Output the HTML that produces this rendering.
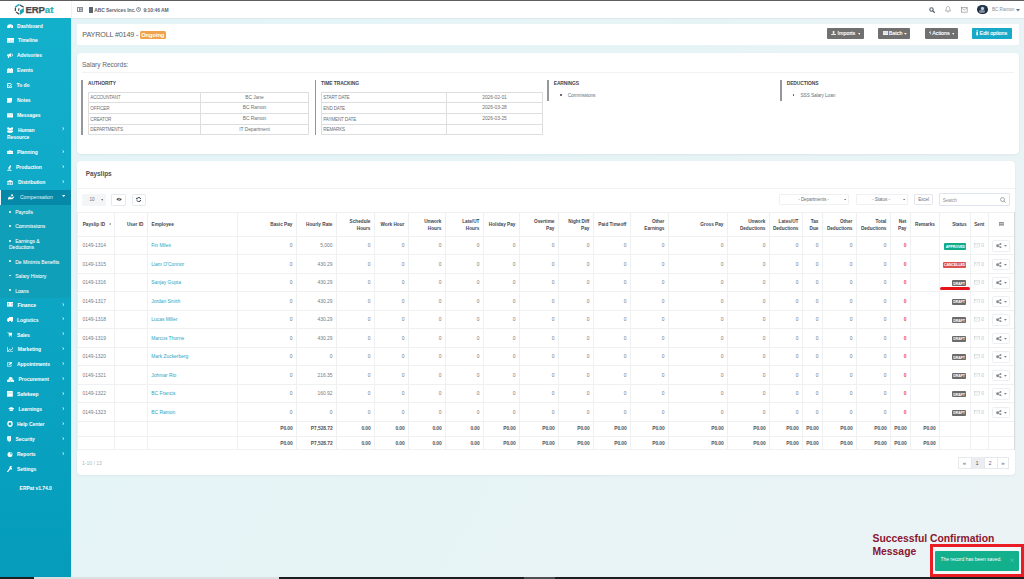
<!DOCTYPE html><html><head><meta charset="utf-8"><style>
html,body{margin:0;padding:0;}
body{width:1024px;height:579px;overflow:hidden;position:relative;background:linear-gradient(120deg,#e4f4f7 0%,#e6f4f6 45%,#ebf3f5 100%);font-family:"Liberation Sans", sans-serif;}
.t{position:absolute;white-space:nowrap;}

</style></head><body>
<div style="position:absolute;left:0px;top:0px;width:1024px;height:18px;background:#fff;"></div>
<div style="position:absolute;left:0px;top:0px;width:1024px;height:1px;background:#5e5e5e;"></div>
<div style="position:absolute;left:71px;top:1px;width:1px;height:17px;background:#f0f3f4;"></div>
<div style="position:absolute;left:0px;top:18px;width:1024px;height:1px;background:#dbe9ec;"></div>
<svg style="position:absolute;left:12px;top:2px" width="16" height="15" viewBox="12 2 16 15">
<path d="M15.6 6.9 L18.9 4.6" stroke="#23aab7" stroke-width="1.4" stroke-linecap="round"/>
<path d="M20.2 5.2 L23.2 6.9" stroke="#4a4a4c" stroke-width="1.3" stroke-linecap="round"/>
<path d="M15.4 8.1 L15.4 10.6" stroke="#4a4a4c" stroke-width="1.3" stroke-linecap="round"/>
<path d="M18.9 8.6 L18.6 10.4" stroke="#4a4a4c" stroke-width="1.1" stroke-linecap="round"/>
<path d="M16.4 12.3 L18.8 13.9" stroke="#4a4a4c" stroke-width="1.3" stroke-linecap="round"/>
<path d="M19.9 10.3 L23.9 7.9 L23.9 11.9 L19.9 15 Z" fill="#1ea5b4"/>
</svg>
<div class="t" style="left:25.6px;top:4.4px;font-size:9.6px;line-height:11px;font-weight:bold;color:#4a4a4c;letter-spacing:-0.2px;-webkit-text-stroke:0.25px #4a4a4c">ERP<span style="color:#22b3b0;letter-spacing:0.3px;-webkit-text-stroke:0.25px #22b3b0">at</span></div>
<svg style="position:absolute;left:77px;top:7px" width="6" height="5" viewBox="0 0 6 5"><rect x="0" y="0" width="6" height="5" fill="#8a8f94"/><rect x="1" y="1" width="1" height="3" fill="#fff"/><rect x="3" y="1.5" width="2" height="0.6" fill="#fff"/><rect x="3" y="3" width="2" height="0.6" fill="#fff"/></svg>
<div style="position:absolute;left:89px;top:6.8px;width:4px;height:6px;background:#5b6470;"></div>
<div class="t" style="left:94.2px;top:7.63px;font-size:4.95px;line-height:5.94px;color:#5b6470;font-weight:bold;letter-spacing:-0.06px;">ABC Services Inc.</div>
<svg style="position:absolute;left:136px;top:7.4px" width="5" height="5" viewBox="0 0 10 10"><circle cx="5" cy="5" r="4" fill="none" stroke="#5b6470" stroke-width="1.4"/><path d="M5 2.6 V5.2 H6.8" fill="none" stroke="#5b6470" stroke-width="1.2"/></svg>
<div class="t" style="left:143.4px;top:7.63px;font-size:4.95px;line-height:5.94px;color:#5b6470;font-weight:bold;letter-spacing:-0.08px;">9:10:46 AM</div>
<svg style="position:absolute;left:929.2px;top:6.6px" width="6" height="6" viewBox="0 0 12 12"><circle cx="5" cy="5" r="3.4" fill="none" stroke="#5b6470" stroke-width="2.2"/><path d="M7.6 7.6 L11 11" stroke="#5b6470" stroke-width="2.4" stroke-linecap="round"/></svg>
<svg style="position:absolute;left:945px;top:6.3px" width="6" height="7" viewBox="0 0 12 14"><path d="M6 1 C3 1 2.5 4 2.5 6.5 L1 10 H11 L9.5 6.5 C9.5 4 9 1 6 1 Z" fill="none" stroke="#8a8f94" stroke-width="1.3"/><path d="M4.5 11.5 Q6 13.5 7.5 11.5" fill="none" stroke="#8a8f94" stroke-width="1.2"/></svg>
<svg style="position:absolute;left:961px;top:7px" width="6.5" height="5.5" viewBox="0 0 13 11"><rect x="0.7" y="0.7" width="11.6" height="9.6" fill="none" stroke="#8a8f94" stroke-width="1.3"/><path d="M0.7 2 L6.5 6 L12.3 2" fill="none" stroke="#8a8f94" stroke-width="1.2"/></svg>
<div style="position:absolute;left:977px;top:4.6px;width:10.8px;height:9.8px;border-radius:50%;overflow:hidden;background:radial-gradient(circle at 50% 40%, #3d5a78 0%, #1d3048 50%, #121c28 80%);"><div style="position:absolute;left:3.5px;top:2px;width:3.5px;height:3px;background:#c9d0d8;border-radius:40%;"></div><div style="position:absolute;left:2px;top:5.5px;width:6px;height:3px;background:#7d8a98;border-radius:40%;"></div></div>
<div class="t" style="left:991.9px;top:7.48px;font-size:4.7px;line-height:5.64px;color:#8a8f94;font-weight:normal;letter-spacing:-0.05px;">BC Ramon</div>
<svg style="position:absolute;left:1016px;top:9px" width="4" height="3" viewBox="0 0 4 3"><path d="M0 0 H4 L2 2.5 Z" fill="#6b7178"/></svg>
<div style="position:absolute;left:0px;top:18px;width:71px;height:559px;background:linear-gradient(180deg,#13b0cc 0%,#0ea8c6 40%,#049cba 100%);"></div>
<div style="position:absolute;left:0px;top:190px;width:71px;height:15px;background:#0689a8;"></div>
<div style="position:absolute;left:0px;top:190px;width:1.2px;height:15px;background:#e8f6f9;"></div>
<div style="position:absolute;left:0px;top:205px;width:71px;height:93px;background:#109fb8;"></div>
<svg style="position:absolute;left:6.7px;top:23.7px" width="6.3" height="4.7" viewBox="0 0 12 10" preserveAspectRatio="none"><path d="M0.3 10 V6 A5.7 5.7 0 0 1 11.7 6 V10 Z" fill="#fff"/><path d="M6 9 L8 4.5" stroke="#12abc8" stroke-width="1.1"/><circle cx="6" cy="9" r="1" fill="#12abc8"/></svg>
<div class="t" style="left:17.1px;top:22.50px;font-size:5.0px;line-height:6.00px;color:#fff;font-weight:bold;letter-spacing:-0.06px;">Dashboard</div>
<svg style="position:absolute;left:6.7px;top:38.2px" width="7.3" height="4.7" viewBox="0 0 12 10" preserveAspectRatio="none"><rect x="0" y="0" width="12" height="10" fill="#fff"/><rect x="1.5" y="5.5" width="2.5" height="3" fill="#bfe9f1"/><rect x="5" y="3" width="2.5" height="5.5" fill="#bfe9f1"/><rect x="8.5" y="4.5" width="2.5" height="4" fill="#bfe9f1"/></svg>
<div class="t" style="left:18px;top:37.10px;font-size:5.0px;line-height:6.00px;color:#fff;font-weight:bold;letter-spacing:-0.06px;">Timeline</div>
<svg style="position:absolute;left:6.7px;top:53.2px" width="6.3" height="4.8" viewBox="0 0 12 10" preserveAspectRatio="none"><path d="M0 3 H2.5 L8 0 V8.5 L2.5 5.8 H0 Z" fill="#fff"/><rect x="1.6" y="5.6" width="2.6" height="4.4" fill="#fff"/><path d="M9.6 1.5 Q12.5 4.2 9.6 7" stroke="#fff" stroke-width="1.2" fill="none"/></svg>
<div class="t" style="left:17px;top:52.10px;font-size:5.0px;line-height:6.00px;color:#fff;font-weight:bold;letter-spacing:-0.06px;">Advisories</div>
<svg style="position:absolute;left:6.7px;top:67.7px" width="6.3" height="5.7" viewBox="0 0 12 10" preserveAspectRatio="none"><rect x="0" y="1.5" width="12" height="8.5" rx="0.8" fill="#fff"/><rect x="1.5" y="4.5" width="9" height="4.3" fill="#bfe9f1"/><rect x="5.3" y="4.5" width="1.2" height="4.3" fill="#fff"/><rect x="1.5" y="6.3" width="9" height="0.9" fill="#fff"/><rect x="2.5" y="0" width="1.8" height="3" fill="#fff"/><rect x="7.7" y="0" width="1.8" height="3" fill="#fff"/></svg>
<div class="t" style="left:17px;top:67.20px;font-size:5.0px;line-height:6.00px;color:#fff;font-weight:bold;letter-spacing:-0.06px;">Events</div>
<svg style="position:absolute;left:6.7px;top:82.7px" width="5.7" height="5.1" viewBox="0 0 12 10" preserveAspectRatio="none"><path d="M8 1 H1 V9.2 H9.2 V5.5" stroke="#fff" stroke-width="1.8" fill="none"/><path d="M2.6 4.6 L5 7 L11.2 0.8" stroke="#fff" stroke-width="1.9" fill="none"/></svg>
<div class="t" style="left:16.6px;top:82.30px;font-size:5.0px;line-height:6.00px;color:#fff;font-weight:bold;letter-spacing:-0.06px;">To do</div>
<svg style="position:absolute;left:6.9px;top:98.2px" width="5.5" height="4.7" viewBox="0 0 12 10" preserveAspectRatio="none"><path d="M0 0 H12 V7 L8 10 H0 Z" fill="#fff"/><path d="M8 10 V7 H12" fill="#9fdfeb"/></svg>
<div class="t" style="left:17px;top:97.00px;font-size:5.0px;line-height:6.00px;color:#fff;font-weight:bold;letter-spacing:-0.06px;">Notes</div>
<svg style="position:absolute;left:6.7px;top:113.2px" width="6.3" height="4.7" viewBox="0 0 12 10" preserveAspectRatio="none"><rect x="0" y="0.5" width="12" height="9" fill="#fff"/><path d="M0.3 1.2 L6 5.6 L11.7 1.2" stroke="#7fd3e3" stroke-width="1" fill="none"/></svg>
<div class="t" style="left:17px;top:111.80px;font-size:5.0px;line-height:6.00px;color:#fff;font-weight:bold;letter-spacing:-0.06px;">Messages</div>
<svg style="position:absolute;left:6.7px;top:149.8px" width="6.3" height="4.2" viewBox="0 0 12 10" preserveAspectRatio="none"><rect x="0" y="2.3" width="12" height="7.7" rx="1" fill="#fff"/><path d="M4 2.5 V0.8 H8 V2.5" stroke="#fff" stroke-width="1.2" fill="none"/><rect x="0" y="5.5" width="12" height="0.8" fill="#7fd3e3"/></svg>
<div class="t" style="left:17px;top:148.90px;font-size:5.0px;line-height:6.00px;color:#fff;font-weight:bold;letter-spacing:-0.06px;">Planning</div>
<svg style="position:absolute;left:62.2px;top:149.70px" width="2.5" height="3.2" viewBox="0 0 5 7"><path d="M1 0.8 L4 3.5 L1 6.2" stroke="#fff" stroke-width="1.9" fill="none"/></svg>
<svg style="position:absolute;left:6.7px;top:164.9px" width="5.3" height="5.7" viewBox="0 0 12 10" preserveAspectRatio="none"><path d="M7.5 0 L9.5 2 L6 7 L3.5 7 L3.5 4.5 Z" fill="#fff"/><path d="M2 7.5 H9" stroke="#fff" stroke-width="1"/><rect x="0.5" y="8.8" width="10" height="1.2" fill="#fff"/></svg>
<div class="t" style="left:16px;top:164.20px;font-size:5.0px;line-height:6.00px;color:#fff;font-weight:bold;letter-spacing:-0.06px;">Production</div>
<svg style="position:absolute;left:62.2px;top:165.00px" width="2.5" height="3.2" viewBox="0 0 5 7"><path d="M1 0.8 L4 3.5 L1 6.2" stroke="#fff" stroke-width="1.9" fill="none"/></svg>
<svg style="position:absolute;left:6.7px;top:179.9px" width="6.3" height="5.1" viewBox="0 0 12 10" preserveAspectRatio="none"><path d="M0 3 L6 0 L12 3 V3.8 H0 Z" fill="#fff"/><rect x="1" y="4.2" width="2" height="4.4" fill="#fff"/><rect x="5" y="4.2" width="2" height="4.4" fill="#fff"/><rect x="9" y="4.2" width="2" height="4.4" fill="#fff"/><rect x="0" y="8.8" width="12" height="1.2" fill="#fff"/></svg>
<div class="t" style="left:18px;top:179.00px;font-size:5.0px;line-height:6.00px;color:#fff;font-weight:bold;letter-spacing:-0.06px;">Distribution</div>
<svg style="position:absolute;left:62.2px;top:179.80px" width="2.5" height="3.2" viewBox="0 0 5 7"><path d="M1 0.8 L4 3.5 L1 6.2" stroke="#fff" stroke-width="1.9" fill="none"/></svg>
<svg style="position:absolute;left:6.9px;top:302.2px" width="6.6" height="4.6" viewBox="0 0 12 10" preserveAspectRatio="none"><rect x="0" y="0" width="12" height="10" fill="#fff"/><path d="M2.2 2.2 Q4.6 5 2.2 7.8" stroke="#12abc8" stroke-width="1.3" fill="none"/><path d="M9.8 2.2 Q7.4 5 9.8 7.8" stroke="#12abc8" stroke-width="1.3" fill="none"/></svg>
<div class="t" style="left:17.5px;top:301.80px;font-size:5.0px;line-height:6.00px;color:#fff;font-weight:bold;letter-spacing:-0.06px;">Finance</div>
<svg style="position:absolute;left:62.2px;top:302.60px" width="2.5" height="3.2" viewBox="0 0 5 7"><path d="M1 0.8 L4 3.5 L1 6.2" stroke="#fff" stroke-width="1.9" fill="none"/></svg>
<svg style="position:absolute;left:7px;top:317.3px" width="6" height="5.2" viewBox="0 0 12 10" preserveAspectRatio="none"><rect x="4" y="0" width="8" height="7.5" fill="#fff"/><path d="M0 5 L2 2 H4 V7.5 H0 Z" fill="#fff"/><circle cx="2.8" cy="8.5" r="1.5" fill="#fff"/><circle cx="9.5" cy="8.5" r="1.5" fill="#fff"/></svg>
<div class="t" style="left:17px;top:316.50px;font-size:5.0px;line-height:6.00px;color:#fff;font-weight:bold;letter-spacing:-0.06px;">Logistics</div>
<svg style="position:absolute;left:62.2px;top:317.30px" width="2.5" height="3.2" viewBox="0 0 5 7"><path d="M1 0.8 L4 3.5 L1 6.2" stroke="#fff" stroke-width="1.9" fill="none"/></svg>
<svg style="position:absolute;left:7px;top:332.3px" width="5.4" height="4.7" viewBox="0 0 12 10" preserveAspectRatio="none"><path d="M0 0 H3 L4.3 6.8 H11 L12 1.8 H2.5 Z" fill="#fff"/><rect x="3.6" y="7.3" width="7.8" height="0.9" fill="#fff"/><circle cx="5" cy="9" r="1" fill="#fff"/><circle cx="10" cy="9" r="1" fill="#fff"/></svg>
<div class="t" style="left:17px;top:331.50px;font-size:5.0px;line-height:6.00px;color:#fff;font-weight:bold;letter-spacing:-0.06px;">Sales</div>
<svg style="position:absolute;left:62.2px;top:332.30px" width="2.5" height="3.2" viewBox="0 0 5 7"><path d="M1 0.8 L4 3.5 L1 6.2" stroke="#fff" stroke-width="1.9" fill="none"/></svg>
<svg style="position:absolute;left:6.7px;top:346.8px" width="6.8" height="5.2" viewBox="0 0 12 10" preserveAspectRatio="none"><path d="M0.7 0 V9.3 H12" stroke="#fff" stroke-width="1.3" fill="none"/><path d="M2 7.5 L4.8 4.3 L7 6.5 L11 2" stroke="#fff" stroke-width="1.5" fill="none"/><path d="M9 1.5 H11.6 V4" stroke="#fff" stroke-width="1.2" fill="none"/></svg>
<div class="t" style="left:17.8px;top:346.30px;font-size:5.0px;line-height:6.00px;color:#fff;font-weight:bold;letter-spacing:-0.06px;">Marketing</div>
<svg style="position:absolute;left:62.2px;top:347.10px" width="2.5" height="3.2" viewBox="0 0 5 7"><path d="M1 0.8 L4 3.5 L1 6.2" stroke="#fff" stroke-width="1.9" fill="none"/></svg>
<svg style="position:absolute;left:6.7px;top:362px" width="5.7" height="4.6" viewBox="0 0 12 10" preserveAspectRatio="none"><path d="M9 1.2 H0.7 V9.3 H9 V6" stroke="#fff" stroke-width="1.4" fill="none"/><path d="M3.5 7 L4 4.5 L10 -0.5 L12 1.5 L6 6.5 Z" fill="#fff"/></svg>
<div class="t" style="left:17px;top:361.40px;font-size:5.0px;line-height:6.00px;color:#fff;font-weight:bold;letter-spacing:-0.06px;">Appointments</div>
<svg style="position:absolute;left:62.2px;top:362.20px" width="2.5" height="3.2" viewBox="0 0 5 7"><path d="M1 0.8 L4 3.5 L1 6.2" stroke="#fff" stroke-width="1.9" fill="none"/></svg>
<svg style="position:absolute;left:6.7px;top:376.8px" width="7.3" height="5.2" viewBox="0 0 12 10" preserveAspectRatio="none"><path d="M6 0 L9 1.5 V4.5 L6 6 L3 4.5 V1.5 Z" fill="#fff"/><path d="M3 4.3 L6 5.8 V8.8 L3 10.3 L0 8.8 V5.8 Z" fill="#fff"/><path d="M9 4.3 L12 5.8 V8.8 L9 10.3 L6 8.8 V5.8 Z" fill="#fff"/><path d="M1.5 7 L3 7.8 L4.5 7 M7.5 7 L9 7.8 L10.5 7" stroke="#7fd3e3" stroke-width="0.7" fill="none"/></svg>
<div class="t" style="left:18.6px;top:376.40px;font-size:5.0px;line-height:6.00px;color:#fff;font-weight:bold;letter-spacing:-0.06px;">Procurement</div>
<svg style="position:absolute;left:62.2px;top:377.20px" width="2.5" height="3.2" viewBox="0 0 5 7"><path d="M1 0.8 L4 3.5 L1 6.2" stroke="#fff" stroke-width="1.9" fill="none"/></svg>
<svg style="position:absolute;left:6.9px;top:391.3px" width="5.8" height="5.7" viewBox="0 0 12 10" preserveAspectRatio="none"><rect x="0" y="0" width="12" height="10" fill="#fff"/><rect x="2" y="2" width="8" height="3" fill="#c8edf4"/></svg>
<div class="t" style="left:17px;top:391.00px;font-size:5.0px;line-height:6.00px;color:#fff;font-weight:bold;letter-spacing:-0.06px;">Safekeep</div>
<svg style="position:absolute;left:62.2px;top:391.80px" width="2.5" height="3.2" viewBox="0 0 5 7"><path d="M1 0.8 L4 3.5 L1 6.2" stroke="#fff" stroke-width="1.9" fill="none"/></svg>
<svg style="position:absolute;left:7.5px;top:406.8px" width="6.5" height="4.7" viewBox="0 0 13 10.5" preserveAspectRatio="none"><path d="M0 3.2 L6.5 0 L13 3.2 L6.5 6.4 Z" fill="#fff"/><path d="M2.8 4.8 V8 Q6.5 10.5 10.2 8 V4.8 L6.5 6.8 Z" fill="#fff"/><path d="M12 3.5 V7" stroke="#fff" stroke-width="0.8"/></svg>
<div class="t" style="left:18.6px;top:406.00px;font-size:5.0px;line-height:6.00px;color:#fff;font-weight:bold;letter-spacing:-0.06px;">Learnings</div>
<svg style="position:absolute;left:62.2px;top:406.80px" width="2.5" height="3.2" viewBox="0 0 5 7"><path d="M1 0.8 L4 3.5 L1 6.2" stroke="#fff" stroke-width="1.9" fill="none"/></svg>
<svg style="position:absolute;left:6.7px;top:421.2px" width="6" height="5.7" viewBox="0 0 12 10" preserveAspectRatio="none"><circle cx="6" cy="5" r="4.2" fill="none" stroke="#fff" stroke-width="2.6"/></svg>
<div class="t" style="left:17px;top:421.00px;font-size:5.0px;line-height:6.00px;color:#fff;font-weight:bold;letter-spacing:-0.06px;">Help Center</div>
<svg style="position:absolute;left:62.2px;top:421.80px" width="2.5" height="3.2" viewBox="0 0 5 7"><path d="M1 0.8 L4 3.5 L1 6.2" stroke="#fff" stroke-width="1.9" fill="none"/></svg>
<svg style="position:absolute;left:7px;top:436.2px" width="4.4" height="5.8" viewBox="0 0 10 10.6" preserveAspectRatio="none"><path d="M0 0.8 L5 0 L10 0.8 V5.5 Q10 9 5 10.6 Q0 9 0 5.5 Z" fill="#fff"/><path d="M5 1.5 V9" stroke="#7fd3e3" stroke-width="1.2"/></svg>
<div class="t" style="left:15.6px;top:436.00px;font-size:5.0px;line-height:6.00px;color:#fff;font-weight:bold;letter-spacing:-0.06px;">Security</div>
<svg style="position:absolute;left:62.2px;top:436.80px" width="2.5" height="3.2" viewBox="0 0 5 7"><path d="M1 0.8 L4 3.5 L1 6.2" stroke="#fff" stroke-width="1.9" fill="none"/></svg>
<svg style="position:absolute;left:6.7px;top:451.8px" width="6" height="5.2" viewBox="0 0 12 10" preserveAspectRatio="none"><circle cx="6" cy="5" r="5" fill="#fff"/><path d="M6.2 4.6 V0.2 A4.8 4.8 0 0 1 10.8 4.6 Z" fill="#5cc8dc"/></svg>
<div class="t" style="left:17px;top:451.00px;font-size:5.0px;line-height:6.00px;color:#fff;font-weight:bold;letter-spacing:-0.06px;">Reports</div>
<svg style="position:absolute;left:62.2px;top:451.80px" width="2.5" height="3.2" viewBox="0 0 5 7"><path d="M1 0.8 L4 3.5 L1 6.2" stroke="#fff" stroke-width="1.9" fill="none"/></svg>
<svg style="position:absolute;left:6.7px;top:465.8px" width="5.7" height="6.2" viewBox="0 0 12 10" preserveAspectRatio="none"><path d="M1 9.5 L6.5 4" stroke="#fff" stroke-width="2.2" stroke-linecap="round"/><path d="M5.3 3.8 A3.3 3.3 0 0 1 10.6 0.4 L8.5 2.4 L9.3 3.4 L11.5 1.4 A3.3 3.3 0 0 1 7.4 5.8 Z" fill="#fff"/></svg>
<div class="t" style="left:17px;top:466.00px;font-size:5.0px;line-height:6.00px;color:#fff;font-weight:bold;letter-spacing:-0.06px;">Settings</div>
<svg style="position:absolute;left:6.7px;top:127.2px" width="6.3" height="5.8" viewBox="0 0 12 10" preserveAspectRatio="none"><circle cx="2.5" cy="2.5" r="2.2" fill="#fff"/><circle cx="9.5" cy="2.5" r="2.2" fill="#fff"/><circle cx="6" cy="4.2" r="2.4" fill="#fff"/><path d="M0 9 Q0 5.5 2.5 5.5 Q5 5.5 5 7 H7 Q7 5.5 9.5 5.5 Q12 5.5 12 9 Z" fill="#fff"/><rect x="2.5" y="7" width="7" height="3" rx="1" fill="#fff"/></svg>
<div class="t" style="left:17.9px;top:126.80px;font-size:5.0px;line-height:6.00px;color:#fff;font-weight:bold;letter-spacing:-0.06px;">Human</div>
<div class="t" style="left:7px;top:133.80px;font-size:5.0px;line-height:6.00px;color:#fff;font-weight:bold;letter-spacing:-0.06px;">Resource</div>
<svg style="position:absolute;left:62.2px;top:127.40px" width="2.5" height="3.2" viewBox="0 0 5 7"><path d="M1 0.8 L4 3.5 L1 6.2" stroke="#fff" stroke-width="1.9" fill="none"/></svg>
<svg style="position:absolute;left:7.9px;top:194px" width="7.2" height="5.9" viewBox="0 0 14 11"><path d="M0 7.5 L2.5 5 H6 Q7 5.6 6 6.4 H3.8 L4.2 7.2 H7.8 L11 4.6 Q12.4 4.4 12 5.8 L8.6 10 H1.8 L0 11 Z" fill="#fff"/><path d="M6 0.5 L9.5 0.5 L10 4 L6.5 4 Z" fill="#fff"/></svg>
<div class="t" style="left:19.9px;top:194.04px;font-size:5.1px;line-height:6.12px;color:#e3f3f7;font-weight:normal;letter-spacing:0px;">Compensation</div>
<svg style="position:absolute;left:62px;top:194.8px" width="3.2" height="2" viewBox="0 0 4 2.5"><path d="M0 0 H4 L2 2.5 Z" fill="#fff"/></svg>
<div style="position:absolute;left:8.9px;top:210.80px;width:1.8px;height:1.8px;background:#fff;border-radius:50%"></div>
<div class="t" style="left:15.2px;top:209.00px;font-size:5.0px;line-height:6.00px;color:#fff;font-weight:normal;letter-spacing:0px;-webkit-text-stroke:0.05px #fff;">Payrolls</div>
<div style="position:absolute;left:8.9px;top:225.00px;width:1.8px;height:1.8px;background:#fff;border-radius:50%"></div>
<div class="t" style="left:15.2px;top:223.20px;font-size:5.0px;line-height:6.00px;color:#fff;font-weight:normal;letter-spacing:0px;-webkit-text-stroke:0.05px #fff;">Commissions</div>
<div style="position:absolute;left:8.9px;top:240.20px;width:1.8px;height:1.8px;background:#fff;border-radius:50%"></div>
<div class="t" style="left:15.2px;top:238.40px;font-size:5.0px;line-height:6.00px;color:#fff;font-weight:normal;letter-spacing:0px;-webkit-text-stroke:0.05px #fff;">Earnings &amp;</div>
<div style="position:absolute;left:8.9px;top:260.40px;width:1.8px;height:1.8px;background:#fff;border-radius:50%"></div>
<div class="t" style="left:15.2px;top:258.60px;font-size:5.0px;line-height:6.00px;color:#fff;font-weight:normal;letter-spacing:0px;-webkit-text-stroke:0.05px #fff;">De Minimis Benefits</div>
<div style="position:absolute;left:8.9px;top:274.70px;width:1.8px;height:1.8px;background:#fff;border-radius:50%"></div>
<div class="t" style="left:15.2px;top:272.90px;font-size:5.0px;line-height:6.00px;color:#fff;font-weight:normal;letter-spacing:0px;-webkit-text-stroke:0.05px #fff;">Salary History</div>
<div style="position:absolute;left:8.9px;top:289.40px;width:1.8px;height:1.8px;background:#fff;border-radius:50%"></div>
<div class="t" style="left:15.2px;top:287.60px;font-size:5.0px;line-height:6.00px;color:#fff;font-weight:normal;letter-spacing:0px;-webkit-text-stroke:0.05px #fff;">Loans</div>
<div class="t" style="left:9px;top:244.30px;font-size:5.0px;line-height:6.00px;color:#fff;font-weight:normal;letter-spacing:0px;-webkit-text-stroke:0.05px #fff;">Deductions</div>
<div class="t" style="left:19.6px;top:485.00px;font-size:5.0px;line-height:6.00px;color:#fff;font-weight:bold;letter-spacing:-0.05px;">ERPat v1.74.0</div>
<div style="position:absolute;left:0px;top:577px;width:1024px;height:2px;background:#1c1f22;"></div>
<div style="position:absolute;left:34px;top:577px;width:245px;height:2px;background:#dcdedf;"></div>
<div style="position:absolute;left:524px;top:577px;width:31px;height:2px;background:#4e5052;"></div>
<div style="position:absolute;left:77px;top:24px;width:942px;height:21px;background:#fff;border-radius:1px;"></div>
<div class="t" style="left:82.3px;top:30.98px;font-size:7.2px;line-height:8.64px;color:#555c63;font-weight:normal;letter-spacing:-0.15px;">PAYROLL #0149 -</div>
<div style="position:absolute;left:140px;top:31.2px;width:25.5px;height:7.8px;background:#f0a34a;border-radius:1.5px;"></div>
<div class="t" style="left:52.75px;width:200px;top:32.32px;font-size:5.8px;line-height:6.96px;color:#fff;font-weight:bold;text-align:center;letter-spacing:-0.1px;">Ongoing</div>
<div style="position:absolute;left:827.2px;top:28px;width:36.59999999999991px;height:10.8px;background:#707070;border-radius:1px;"></div>
<svg style="position:absolute;left:831.2px;top:30.8px" width="5.2" height="4.4" viewBox="0 0 10 9"><circle cx="5" cy="2.2" r="2" fill="#fff"/><path d="M2 6 Q5 3.5 8 6 Z" fill="#fff"/><rect x="0" y="6.5" width="10" height="2.5" fill="#fff"/></svg>
<div class="t" style="left:837.6px;top:29.86px;font-size:5.4px;line-height:6.48px;color:#fff;font-weight:normal;letter-spacing:-0.05px;-webkit-text-stroke:0.15px #fff;">Imports</div>
<svg style="position:absolute;left:857.5px;top:32.9px" width="2.8" height="1.8" viewBox="0 0 4 2.5"><path d="M0 0 H4 L2 2.5 Z" fill="#fff"/></svg>
<div style="position:absolute;left:878.2px;top:28px;width:31.799999999999955px;height:10.8px;background:#707070;border-radius:1px;"></div>
<svg style="position:absolute;left:882.6px;top:30.9px" width="5.2" height="4.3" viewBox="0 0 10 8"><rect x="0" y="0" width="10" height="8" fill="#f2f2f2"/><rect x="0.8" y="2.2" width="8.4" height="0.6" fill="#bbb"/><rect x="0.8" y="4.6" width="8.4" height="0.6" fill="#bbb"/></svg>
<div class="t" style="left:888.8px;top:29.86px;font-size:5.4px;line-height:6.48px;color:#fff;font-weight:normal;letter-spacing:-0.05px;-webkit-text-stroke:0.15px #fff;">Batch</div>
<svg style="position:absolute;left:903.8px;top:32.9px" width="2.8" height="1.8" viewBox="0 0 4 2.5"><path d="M0 0 H4 L2 2.5 Z" fill="#fff"/></svg>
<div style="position:absolute;left:924.6px;top:28px;width:33.19999999999993px;height:10.8px;background:#707070;border-radius:1px;"></div>
<svg style="position:absolute;left:928.8px;top:30.2px" width="2.4" height="5.6" viewBox="0 0 4 10"><path d="M2.8 0 L0 5.5 H2 L1.2 10 L4 4.3 H2 Z" fill="#fff"/></svg>
<div class="t" style="left:932.3px;top:29.86px;font-size:5.4px;line-height:6.48px;color:#fff;font-weight:normal;letter-spacing:-0.05px;-webkit-text-stroke:0.15px #fff;">Actions</div>
<svg style="position:absolute;left:951.6px;top:32.9px" width="2.8" height="1.8" viewBox="0 0 4 2.5"><path d="M0 0 H4 L2 2.5 Z" fill="#fff"/></svg>
<div style="position:absolute;left:972px;top:28px;width:39.799999999999955px;height:10.8px;background:#18a9c9;border-radius:1px;"></div>
<svg style="position:absolute;left:976.1px;top:30.4px" width="2.3" height="5.4" viewBox="0 0 4 10"><circle cx="2" cy="1.2" r="1.2" fill="#fff"/><rect x="0.5" y="3.2" width="3" height="6.8" fill="#fff"/></svg>
<div class="t" style="left:979.6px;top:29.86px;font-size:5.4px;line-height:6.48px;color:#fff;font-weight:normal;letter-spacing:-0.05px;-webkit-text-stroke:0.15px #fff;">Edit options</div>
<div style="position:absolute;left:77px;top:53px;width:942px;height:101px;background:#fff;border-radius:4px;box-shadow:0 1px 2px rgba(120,150,160,0.12);"></div>
<div class="t" style="left:82px;top:61.34px;font-size:6.6px;line-height:7.92px;color:#5f666d;font-weight:normal;letter-spacing:-0.05px;">Salary Records:</div>
<div style="position:absolute;left:82px;top:72px;width:932px;height:1px;background:#f0f2f4;"></div>
<div style="position:absolute;left:81.2px;top:80px;width:1.6px;height:55.3px;background:#94989c;"></div>
<div class="t" style="left:88px;top:80.76px;font-size:4.9px;line-height:5.88px;color:#3e4650;font-weight:bold;letter-spacing:-0.06px;">AUTHORITY</div>
<div style="position:absolute;left:314.6px;top:80px;width:1.6px;height:55.3px;background:#94989c;"></div>
<div class="t" style="left:321px;top:80.76px;font-size:4.9px;line-height:5.88px;color:#3e4650;font-weight:bold;letter-spacing:-0.06px;">TIME TRACKING</div>
<div style="position:absolute;left:547px;top:80px;width:1.6px;height:21px;background:#94989c;"></div>
<div class="t" style="left:553.7px;top:80.76px;font-size:4.9px;line-height:5.88px;color:#3e4650;font-weight:bold;letter-spacing:-0.06px;">EARNINGS</div>
<div style="position:absolute;left:780.3px;top:80px;width:1.6px;height:21px;background:#94989c;"></div>
<div class="t" style="left:786.7px;top:80.76px;font-size:4.9px;line-height:5.88px;color:#3e4650;font-weight:bold;letter-spacing:-0.06px;">DEDUCTIONS</div>
<div style="position:absolute;left:88px;top:92px;width:221px;height:1px;background:#dcdee0;"></div>
<div style="position:absolute;left:88px;top:102px;width:221px;height:1px;background:#dcdee0;"></div>
<div style="position:absolute;left:88px;top:113px;width:221px;height:1px;background:#dcdee0;"></div>
<div style="position:absolute;left:88px;top:124px;width:221px;height:1px;background:#dcdee0;"></div>
<div style="position:absolute;left:88px;top:134px;width:221px;height:1px;background:#dcdee0;"></div>
<div style="position:absolute;left:88px;top:92px;width:1px;height:43px;background:#dcdee0;"></div>
<div style="position:absolute;left:200px;top:92px;width:1px;height:43px;background:#dcdee0;"></div>
<div style="position:absolute;left:308px;top:92px;width:1px;height:43px;background:#dcdee0;"></div>
<div class="t" style="left:90.3px;top:95.04px;font-size:4.6px;line-height:5.52px;color:#6a7178;font-weight:normal;letter-spacing:-0.15px;">ACCOUNTANT</div>
<div class="t" style="left:154.50px;width:200px;top:94.86px;font-size:4.9px;line-height:5.88px;color:#6a7178;font-weight:normal;text-align:center;letter-spacing:-0.05px;">BC Jane</div>
<div class="t" style="left:90.3px;top:105.54px;font-size:4.6px;line-height:5.52px;color:#6a7178;font-weight:normal;letter-spacing:-0.15px;">OFFICER</div>
<div class="t" style="left:154.50px;width:200px;top:105.36px;font-size:4.9px;line-height:5.88px;color:#6a7178;font-weight:normal;text-align:center;letter-spacing:-0.05px;">BC Ramon</div>
<div class="t" style="left:90.3px;top:116.54px;font-size:4.6px;line-height:5.52px;color:#6a7178;font-weight:normal;letter-spacing:-0.15px;">CREATOR</div>
<div class="t" style="left:154.50px;width:200px;top:116.36px;font-size:4.9px;line-height:5.88px;color:#6a7178;font-weight:normal;text-align:center;letter-spacing:-0.05px;">BC Ramon</div>
<div class="t" style="left:90.3px;top:127.04px;font-size:4.6px;line-height:5.52px;color:#6a7178;font-weight:normal;letter-spacing:-0.15px;">DEPARTMENTS</div>
<div class="t" style="left:154.50px;width:200px;top:126.86px;font-size:4.9px;line-height:5.88px;color:#6a7178;font-weight:normal;text-align:center;letter-spacing:-0.05px;">IT Department</div>
<div style="position:absolute;left:321px;top:92px;width:222px;height:1px;background:#dcdee0;"></div>
<div style="position:absolute;left:321px;top:102px;width:222px;height:1px;background:#dcdee0;"></div>
<div style="position:absolute;left:321px;top:113px;width:222px;height:1px;background:#dcdee0;"></div>
<div style="position:absolute;left:321px;top:124px;width:222px;height:1px;background:#dcdee0;"></div>
<div style="position:absolute;left:321px;top:134px;width:222px;height:1px;background:#dcdee0;"></div>
<div style="position:absolute;left:321px;top:92px;width:1px;height:43px;background:#dcdee0;"></div>
<div style="position:absolute;left:446px;top:92px;width:1px;height:43px;background:#dcdee0;"></div>
<div style="position:absolute;left:542px;top:92px;width:1px;height:43px;background:#dcdee0;"></div>
<div class="t" style="left:323.3px;top:95.04px;font-size:4.6px;line-height:5.52px;color:#6a7178;font-weight:normal;letter-spacing:-0.15px;">START DATE</div>
<div class="t" style="left:394.50px;width:200px;top:94.86px;font-size:4.9px;line-height:5.88px;color:#6a7178;font-weight:normal;text-align:center;letter-spacing:-0.05px;">2026-02-01</div>
<div class="t" style="left:323.3px;top:105.54px;font-size:4.6px;line-height:5.52px;color:#6a7178;font-weight:normal;letter-spacing:-0.15px;">END DATE</div>
<div class="t" style="left:394.50px;width:200px;top:105.36px;font-size:4.9px;line-height:5.88px;color:#6a7178;font-weight:normal;text-align:center;letter-spacing:-0.05px;">2026-03-28</div>
<div class="t" style="left:323.3px;top:116.54px;font-size:4.6px;line-height:5.52px;color:#6a7178;font-weight:normal;letter-spacing:-0.15px;">PAYMENT DATE</div>
<div class="t" style="left:394.50px;width:200px;top:116.36px;font-size:4.9px;line-height:5.88px;color:#6a7178;font-weight:normal;text-align:center;letter-spacing:-0.05px;">2026-03-25</div>
<div class="t" style="left:323.3px;top:127.04px;font-size:4.6px;line-height:5.52px;color:#6a7178;font-weight:normal;letter-spacing:-0.15px;">REMARKS</div>
<div style="position:absolute;left:560.3px;top:94.3px;width:1.3px;height:1.3px;background:#555;border-radius:50%"></div>
<div class="t" style="left:567.7px;top:92.82px;font-size:4.8px;line-height:5.76px;color:#6a7178;font-weight:normal;letter-spacing:-0.1px;">Commissions</div>
<div style="position:absolute;left:792.8px;top:94.3px;width:1.3px;height:1.3px;background:#555;border-radius:50%"></div>
<div class="t" style="left:800.5px;top:92.82px;font-size:4.8px;line-height:5.76px;color:#6a7178;font-weight:normal;letter-spacing:-0.12px;">SSS Salary Loan</div>
<div style="position:absolute;left:77px;top:161px;width:938px;height:314px;background:#fff;border-radius:4px;box-shadow:0 1px 2px rgba(120,150,160,0.12);"></div>
<div class="t" style="left:85.7px;top:170.26px;font-size:6.4px;line-height:7.68px;color:#4a5259;font-weight:bold;">Payslips</div>
<div style="position:absolute;left:77px;top:188px;width:938px;height:1px;background:#f0f2f4;"></div>
<div style="position:absolute;left:82px;top:193.5px;width:24px;height:12px;background:#f3f5f7;border-radius:1px;"></div>
<div class="t" style="left:89.5px;top:197.44px;font-size:4.6px;line-height:5.52px;color:#6a7178;font-weight:normal;">10</div>
<svg style="position:absolute;left:100.5px;top:198.8px" width="2.6" height="1.8" viewBox="0 0 4 3"><path d="M0 0 H4 L2 3 Z" fill="#6a7178"/></svg>
<div style="position:absolute;left:111px;top:193.5px;width:15px;height:12.3px;border:1px solid #e6e9ed;box-sizing:border-box;border-radius:1px;background:#fff;"></div>
<svg style="position:absolute;left:115.8px;top:197.4px" width="6.2" height="4.6" viewBox="0 0 12 9"><path d="M0.5 4.5 Q6 -1.5 11.5 4.5 Q6 10.5 0.5 4.5 Z" fill="#4a5360"/><circle cx="6" cy="4.5" r="1.8" fill="#c98a4a"/><path d="M3 8.5 L9.5 0.5" stroke="#fff" stroke-width="1"/></svg>
<div style="position:absolute;left:131.5px;top:193.5px;width:14.2px;height:12.3px;border:1px solid #e6e9ed;box-sizing:border-box;border-radius:1px;background:#fff;"></div>
<svg style="position:absolute;left:135.6px;top:196.8px" width="5.6" height="5.2" viewBox="0 0 11 10"><path d="M9.3 3.6 A4 4 0 0 0 1.8 3.4" stroke="#2e3a4a" stroke-width="1.9" fill="none"/><path d="M1.7 6.4 A4 4 0 0 0 9.2 6.6" stroke="#2e3a4a" stroke-width="1.9" fill="none"/><path d="M0 1.2 L0.8 5 L4.3 3.6 Z" fill="#2e3a4a"/><path d="M11 8.8 L10.2 5 L6.7 6.4 Z" fill="#2e3a4a"/></svg>
<div style="position:absolute;left:779px;top:193.6px;width:70.4px;height:11.5px;border:0.8px solid #eef0f2;box-sizing:border-box;border-radius:1px;"></div>
<div class="t" style="left:713.50px;width:200px;top:197.34px;font-size:4.6px;line-height:5.52px;color:#6a7178;font-weight:normal;text-align:center;letter-spacing:-0.1px;">- Departments -</div>
<svg style="position:absolute;left:844px;top:198.8px" width="2.4" height="1.6" viewBox="0 0 4 3"><path d="M0 0 H4 L2 3 Z" fill="#6a7178"/></svg>
<div style="position:absolute;left:855.7px;top:193.6px;width:52.5px;height:11.5px;border:0.8px solid #eef0f2;box-sizing:border-box;border-radius:1px;"></div>
<div class="t" style="left:781.00px;width:200px;top:197.34px;font-size:4.6px;line-height:5.52px;color:#6a7178;font-weight:normal;text-align:center;letter-spacing:-0.1px;">- Status -</div>
<svg style="position:absolute;left:903px;top:198.8px" width="2.4" height="1.6" viewBox="0 0 4 3"><path d="M0 0 H4 L2 3 Z" fill="#6a7178"/></svg>
<div style="position:absolute;left:913.6px;top:193.6px;width:19.9px;height:11.5px;border:1px solid #e3e6ea;box-sizing:border-box;border-radius:1px;"></div>
<div class="t" style="left:823.50px;width:200px;top:197.24px;font-size:4.6px;line-height:5.52px;color:#6a7178;font-weight:normal;text-align:center;letter-spacing:-0.1px;">Excel</div>
<div style="position:absolute;left:939px;top:193.3px;width:70.7px;height:12.7px;border:0.8px solid #dfe3ef;box-sizing:border-box;border-radius:1px;"></div>
<div class="t" style="left:942.8px;top:197.64px;font-size:4.6px;line-height:5.52px;color:#8a9096;font-weight:normal;letter-spacing:-0.1px;">Search</div>
<svg style="position:absolute;left:1000px;top:196.6px" width="6" height="6" viewBox="0 0 10 10"><circle cx="4.2" cy="4.2" r="3.3" stroke="#7a8086" stroke-width="1.1" fill="none"/><path d="M6.6 6.6 L9.5 9.5" stroke="#7a8086" stroke-width="1.2"/></svg>
<div style="position:absolute;left:77px;top:212px;width:938px;height:1px;background:#eef0f2;"></div>
<div style="position:absolute;left:77px;top:236px;width:938px;height:1px;background:#eef0f2;"></div>
<div style="position:absolute;left:77px;top:254px;width:938px;height:1px;background:#eef0f2;"></div>
<div style="position:absolute;left:77px;top:273px;width:938px;height:1px;background:#eef0f2;"></div>
<div style="position:absolute;left:77px;top:291px;width:938px;height:1px;background:#eef0f2;"></div>
<div style="position:absolute;left:77px;top:310px;width:938px;height:1px;background:#eef0f2;"></div>
<div style="position:absolute;left:77px;top:328px;width:938px;height:1px;background:#eef0f2;"></div>
<div style="position:absolute;left:77px;top:347px;width:938px;height:1px;background:#eef0f2;"></div>
<div style="position:absolute;left:77px;top:365px;width:938px;height:1px;background:#eef0f2;"></div>
<div style="position:absolute;left:77px;top:384px;width:938px;height:1px;background:#eef0f2;"></div>
<div style="position:absolute;left:77px;top:402px;width:938px;height:1px;background:#eef0f2;"></div>
<div style="position:absolute;left:77px;top:421px;width:938px;height:1px;background:#eef0f2;"></div>
<div style="position:absolute;left:77px;top:436px;width:938px;height:1px;background:#eef0f2;"></div>
<div style="position:absolute;left:77px;top:449px;width:938px;height:1px;background:#eef0f2;"></div>
<div style="position:absolute;left:77px;top:212px;width:1px;height:238px;background:#eef0f2;"></div>
<div style="position:absolute;left:114px;top:212px;width:1px;height:238px;background:#eef0f2;"></div>
<div style="position:absolute;left:147px;top:212px;width:1px;height:238px;background:#eef0f2;"></div>
<div style="position:absolute;left:237px;top:212px;width:1px;height:238px;background:#eef0f2;"></div>
<div style="position:absolute;left:296px;top:212px;width:1px;height:238px;background:#eef0f2;"></div>
<div style="position:absolute;left:336px;top:212px;width:1px;height:238px;background:#eef0f2;"></div>
<div style="position:absolute;left:374px;top:212px;width:1px;height:238px;background:#eef0f2;"></div>
<div style="position:absolute;left:408px;top:212px;width:1px;height:238px;background:#eef0f2;"></div>
<div style="position:absolute;left:445px;top:212px;width:1px;height:238px;background:#eef0f2;"></div>
<div style="position:absolute;left:483px;top:212px;width:1px;height:238px;background:#eef0f2;"></div>
<div style="position:absolute;left:519px;top:212px;width:1px;height:238px;background:#eef0f2;"></div>
<div style="position:absolute;left:558px;top:212px;width:1px;height:238px;background:#eef0f2;"></div>
<div style="position:absolute;left:593px;top:212px;width:1px;height:238px;background:#eef0f2;"></div>
<div style="position:absolute;left:630px;top:212px;width:1px;height:238px;background:#eef0f2;"></div>
<div style="position:absolute;left:668px;top:212px;width:1px;height:238px;background:#eef0f2;"></div>
<div style="position:absolute;left:727px;top:212px;width:1px;height:238px;background:#eef0f2;"></div>
<div style="position:absolute;left:769px;top:212px;width:1px;height:238px;background:#eef0f2;"></div>
<div style="position:absolute;left:802px;top:212px;width:1px;height:238px;background:#eef0f2;"></div>
<div style="position:absolute;left:822px;top:212px;width:1px;height:238px;background:#eef0f2;"></div>
<div style="position:absolute;left:856px;top:212px;width:1px;height:238px;background:#eef0f2;"></div>
<div style="position:absolute;left:890px;top:212px;width:1px;height:238px;background:#eef0f2;"></div>
<div style="position:absolute;left:910px;top:212px;width:1px;height:238px;background:#eef0f2;"></div>
<div style="position:absolute;left:939px;top:212px;width:1px;height:238px;background:#eef0f2;"></div>
<div style="position:absolute;left:970px;top:212px;width:1px;height:238px;background:#eef0f2;"></div>
<div style="position:absolute;left:988px;top:212px;width:1px;height:238px;background:#eef0f2;"></div>
<div style="position:absolute;left:1014px;top:212px;width:1px;height:238px;background:#d9dcdf;"></div>
<div class="t" style="left:82.7px;top:222.28px;font-size:4.7px;line-height:5.64px;color:#3e4650;font-weight:bold;">Payslip ID</div>
<svg style="position:absolute;left:108.8px;top:223.2px" width="2.6" height="1.6" viewBox="0 0 4 2.5"><path d="M0 2.5 L2 0 L4 2.5 Z" fill="#6a7178"/></svg>
<div class="t" style="right:880.60px;top:222.28px;font-size:4.7px;line-height:5.64px;color:#3e4650;font-weight:bold;text-align:right;">User ID</div>
<div class="t" style="left:151.6px;top:222.28px;font-size:4.7px;line-height:5.64px;color:#3e4650;font-weight:bold;">Employee</div>
<div class="t" style="right:731.60px;top:222.28px;font-size:4.7px;line-height:5.64px;color:#3e4650;font-weight:bold;text-align:right;">Basic Pay</div>
<div class="t" style="right:691.60px;top:222.28px;font-size:4.7px;line-height:5.64px;color:#3e4650;font-weight:bold;text-align:right;">Hourly Rate</div>
<div class="t" style="right:653.60px;top:218.88px;font-size:4.7px;line-height:5.64px;color:#3e4650;font-weight:bold;text-align:right;">Schedule</div>
<div class="t" style="right:653.60px;top:225.68px;font-size:4.7px;line-height:5.64px;color:#3e4650;font-weight:bold;text-align:right;">Hours</div>
<div class="t" style="right:619.60px;top:222.28px;font-size:4.7px;line-height:5.64px;color:#3e4650;font-weight:bold;text-align:right;">Work Hour</div>
<div class="t" style="right:582.60px;top:218.88px;font-size:4.7px;line-height:5.64px;color:#3e4650;font-weight:bold;text-align:right;">Unwork</div>
<div class="t" style="right:582.60px;top:225.68px;font-size:4.7px;line-height:5.64px;color:#3e4650;font-weight:bold;text-align:right;">Hours</div>
<div class="t" style="right:544.60px;top:218.88px;font-size:4.7px;line-height:5.64px;color:#3e4650;font-weight:bold;text-align:right;">Late/UT</div>
<div class="t" style="right:544.60px;top:225.68px;font-size:4.7px;line-height:5.64px;color:#3e4650;font-weight:bold;text-align:right;">Hours</div>
<div class="t" style="right:508.60px;top:222.28px;font-size:4.7px;line-height:5.64px;color:#3e4650;font-weight:bold;text-align:right;">Holiday Pay</div>
<div class="t" style="right:469.60px;top:218.88px;font-size:4.7px;line-height:5.64px;color:#3e4650;font-weight:bold;text-align:right;">Overtime</div>
<div class="t" style="right:469.60px;top:225.68px;font-size:4.7px;line-height:5.64px;color:#3e4650;font-weight:bold;text-align:right;">Pay</div>
<div class="t" style="right:434.60px;top:218.88px;font-size:4.7px;line-height:5.64px;color:#3e4650;font-weight:bold;text-align:right;">Night Diff</div>
<div class="t" style="right:434.60px;top:225.68px;font-size:4.7px;line-height:5.64px;color:#3e4650;font-weight:bold;text-align:right;">Pay</div>
<div class="t" style="right:397.60px;top:222.28px;font-size:4.7px;line-height:5.64px;color:#3e4650;font-weight:bold;text-align:right;">Paid Timeoff</div>
<div class="t" style="right:359.60px;top:218.88px;font-size:4.7px;line-height:5.64px;color:#3e4650;font-weight:bold;text-align:right;">Other</div>
<div class="t" style="right:359.60px;top:225.68px;font-size:4.7px;line-height:5.64px;color:#3e4650;font-weight:bold;text-align:right;">Earnings</div>
<div class="t" style="right:300.60px;top:222.28px;font-size:4.7px;line-height:5.64px;color:#3e4650;font-weight:bold;text-align:right;">Gross Pay</div>
<div class="t" style="right:258.60px;top:218.88px;font-size:4.7px;line-height:5.64px;color:#3e4650;font-weight:bold;text-align:right;">Unwork</div>
<div class="t" style="right:258.60px;top:225.68px;font-size:4.7px;line-height:5.64px;color:#3e4650;font-weight:bold;text-align:right;">Deductions</div>
<div class="t" style="right:225.60px;top:218.88px;font-size:4.7px;line-height:5.64px;color:#3e4650;font-weight:bold;text-align:right;">Lates/UT</div>
<div class="t" style="right:225.60px;top:225.68px;font-size:4.7px;line-height:5.64px;color:#3e4650;font-weight:bold;text-align:right;">Deductions</div>
<div class="t" style="right:205.60px;top:218.88px;font-size:4.7px;line-height:5.64px;color:#3e4650;font-weight:bold;text-align:right;">Tax</div>
<div class="t" style="right:205.60px;top:225.68px;font-size:4.7px;line-height:5.64px;color:#3e4650;font-weight:bold;text-align:right;">Due</div>
<div class="t" style="right:171.60px;top:218.88px;font-size:4.7px;line-height:5.64px;color:#3e4650;font-weight:bold;text-align:right;">Other</div>
<div class="t" style="right:171.60px;top:225.68px;font-size:4.7px;line-height:5.64px;color:#3e4650;font-weight:bold;text-align:right;">Deductions</div>
<div class="t" style="right:137.60px;top:218.88px;font-size:4.7px;line-height:5.64px;color:#3e4650;font-weight:bold;text-align:right;">Total</div>
<div class="t" style="right:137.60px;top:225.68px;font-size:4.7px;line-height:5.64px;color:#3e4650;font-weight:bold;text-align:right;">Deductions</div>
<div class="t" style="right:117.60px;top:218.88px;font-size:4.7px;line-height:5.64px;color:#3e4650;font-weight:bold;text-align:right;">Net</div>
<div class="t" style="right:117.60px;top:225.68px;font-size:4.7px;line-height:5.64px;color:#3e4650;font-weight:bold;text-align:right;">Pay</div>
<div class="t" style="left:825.00px;width:200px;top:222.28px;font-size:4.7px;line-height:5.64px;color:#3e4650;font-weight:bold;text-align:center;">Remarks</div>
<div class="t" style="right:57.50px;top:222.28px;font-size:4.7px;line-height:5.64px;color:#3e4650;font-weight:bold;text-align:right;">Status</div>
<div class="t" style="left:974.2px;top:222.28px;font-size:4.7px;line-height:5.64px;color:#3e4650;font-weight:bold;">Sent</div>
<svg style="position:absolute;left:999.3px;top:221.8px" width="4.8" height="4.7" viewBox="0 0 8 8"><rect x="0" y="0" width="8" height="8" fill="#8a9096"/><rect x="0.9" y="2.6" width="6.2" height="0.9" fill="#fff"/><rect x="0.9" y="5" width="6.2" height="0.9" fill="#fff"/></svg>
<div class="t" style="left:82.5px;top:243.41px;font-size:4.9px;line-height:5.88px;color:#737a81;font-weight:normal;">0149-1314</div>
<div class="t" style="left:151.3px;top:243.41px;font-size:4.9px;line-height:5.88px;color:#27a6c4;font-weight:normal;">Fin Miles</div>
<div class="t" style="right:731.60px;top:243.41px;font-size:4.9px;line-height:5.88px;color:#737a81;font-weight:normal;text-align:right;">0</div>
<div class="t" style="right:691.60px;top:243.41px;font-size:4.9px;line-height:5.88px;color:#737a81;font-weight:normal;text-align:right;">5,000</div>
<div class="t" style="right:653.60px;top:243.41px;font-size:4.9px;line-height:5.88px;color:#737a81;font-weight:normal;text-align:right;">0</div>
<div class="t" style="right:619.60px;top:243.41px;font-size:4.9px;line-height:5.88px;color:#737a81;font-weight:normal;text-align:right;">0</div>
<div class="t" style="right:582.60px;top:243.41px;font-size:4.9px;line-height:5.88px;color:#737a81;font-weight:normal;text-align:right;">0</div>
<div class="t" style="right:544.60px;top:243.41px;font-size:4.9px;line-height:5.88px;color:#737a81;font-weight:normal;text-align:right;">0</div>
<div class="t" style="right:508.60px;top:243.41px;font-size:4.9px;line-height:5.88px;color:#737a81;font-weight:normal;text-align:right;">0</div>
<div class="t" style="right:469.60px;top:243.41px;font-size:4.9px;line-height:5.88px;color:#737a81;font-weight:normal;text-align:right;">0</div>
<div class="t" style="right:434.60px;top:243.41px;font-size:4.9px;line-height:5.88px;color:#737a81;font-weight:normal;text-align:right;">0</div>
<div class="t" style="right:397.60px;top:243.41px;font-size:4.9px;line-height:5.88px;color:#737a81;font-weight:normal;text-align:right;">0</div>
<div class="t" style="right:359.60px;top:243.41px;font-size:4.9px;line-height:5.88px;color:#737a81;font-weight:normal;text-align:right;">0</div>
<div class="t" style="right:300.60px;top:243.41px;font-size:4.9px;line-height:5.88px;color:#737a81;font-weight:normal;text-align:right;">0</div>
<div class="t" style="right:258.60px;top:243.41px;font-size:4.9px;line-height:5.88px;color:#737a81;font-weight:normal;text-align:right;">0</div>
<div class="t" style="right:225.60px;top:243.41px;font-size:4.9px;line-height:5.88px;color:#737a81;font-weight:normal;text-align:right;">0</div>
<div class="t" style="right:205.60px;top:243.41px;font-size:4.9px;line-height:5.88px;color:#737a81;font-weight:normal;text-align:right;">0</div>
<div class="t" style="right:171.60px;top:243.41px;font-size:4.9px;line-height:5.88px;color:#737a81;font-weight:normal;text-align:right;">0</div>
<div class="t" style="right:137.60px;top:243.41px;font-size:4.9px;line-height:5.88px;color:#737a81;font-weight:normal;text-align:right;">0</div>
<div class="t" style="right:117.60px;top:243.41px;font-size:4.9px;line-height:5.88px;color:#f0443a;font-weight:bold;text-align:right;">0</div>
<div style="position:absolute;left:944.3px;top:243.05px;width:22.2px;height:6.6px;background:#12ab8a;border-radius:1px;"></div>
<div class="t" style="left:855.40px;width:200px;top:244.79px;font-size:3.6px;line-height:4.32px;color:#fff;font-weight:bold;text-align:center;letter-spacing:-0.1px;">APPROVED</div>
<svg style="position:absolute;left:974.3px;top:243.45px" width="5.6" height="4.4" viewBox="0 0 12 9"><rect x="0.5" y="0.5" width="11" height="8" fill="none" stroke="#c3c7cb" stroke-width="1"/><path d="M0.5 1 L6 5 L11.5 1" stroke="#c3c7cb" stroke-width="0.9" fill="none"/></svg>
<div class="t" style="left:981.2px;top:243.41px;font-size:4.9px;line-height:5.88px;color:#bfc3c7;font-weight:normal;">0</div>
<div style="position:absolute;left:992.2px;top:240.05px;width:18.3px;height:11.5px;border:1px solid #eceef1;box-sizing:border-box;border-radius:1.5px;"></div>
<svg style="position:absolute;left:995.9px;top:243.05px" width="6" height="5.4" viewBox="0 0 12 11"><circle cx="3.2" cy="5.5" r="3" fill="#888e94"/><circle cx="9" cy="2.2" r="2" fill="#888e94"/><circle cx="9" cy="8.8" r="2" fill="#888e94"/><path d="M3 5.5 L9 2.2 M3 5.5 L9 8.8" stroke="#888e94" stroke-width="1.4"/></svg>
<svg style="position:absolute;left:1004.2px;top:245.25px" width="2.8" height="1.8" viewBox="0 0 4 2.5"><path d="M0 0 H4 L2 2.5 Z" fill="#7a8086"/></svg>
<div class="t" style="left:82.5px;top:261.91px;font-size:4.9px;line-height:5.88px;color:#737a81;font-weight:normal;">0149-1315</div>
<div class="t" style="left:151.3px;top:261.91px;font-size:4.9px;line-height:5.88px;color:#27a6c4;font-weight:normal;">Liam O'Connor</div>
<div class="t" style="right:731.60px;top:261.91px;font-size:4.9px;line-height:5.88px;color:#737a81;font-weight:normal;text-align:right;">0</div>
<div class="t" style="right:691.60px;top:261.91px;font-size:4.9px;line-height:5.88px;color:#737a81;font-weight:normal;text-align:right;">430.29</div>
<div class="t" style="right:653.60px;top:261.91px;font-size:4.9px;line-height:5.88px;color:#737a81;font-weight:normal;text-align:right;">0</div>
<div class="t" style="right:619.60px;top:261.91px;font-size:4.9px;line-height:5.88px;color:#737a81;font-weight:normal;text-align:right;">0</div>
<div class="t" style="right:582.60px;top:261.91px;font-size:4.9px;line-height:5.88px;color:#737a81;font-weight:normal;text-align:right;">0</div>
<div class="t" style="right:544.60px;top:261.91px;font-size:4.9px;line-height:5.88px;color:#737a81;font-weight:normal;text-align:right;">0</div>
<div class="t" style="right:508.60px;top:261.91px;font-size:4.9px;line-height:5.88px;color:#737a81;font-weight:normal;text-align:right;">0</div>
<div class="t" style="right:469.60px;top:261.91px;font-size:4.9px;line-height:5.88px;color:#737a81;font-weight:normal;text-align:right;">0</div>
<div class="t" style="right:434.60px;top:261.91px;font-size:4.9px;line-height:5.88px;color:#737a81;font-weight:normal;text-align:right;">0</div>
<div class="t" style="right:397.60px;top:261.91px;font-size:4.9px;line-height:5.88px;color:#737a81;font-weight:normal;text-align:right;">0</div>
<div class="t" style="right:359.60px;top:261.91px;font-size:4.9px;line-height:5.88px;color:#737a81;font-weight:normal;text-align:right;">0</div>
<div class="t" style="right:300.60px;top:261.91px;font-size:4.9px;line-height:5.88px;color:#737a81;font-weight:normal;text-align:right;">0</div>
<div class="t" style="right:258.60px;top:261.91px;font-size:4.9px;line-height:5.88px;color:#737a81;font-weight:normal;text-align:right;">0</div>
<div class="t" style="right:225.60px;top:261.91px;font-size:4.9px;line-height:5.88px;color:#737a81;font-weight:normal;text-align:right;">0</div>
<div class="t" style="right:205.60px;top:261.91px;font-size:4.9px;line-height:5.88px;color:#737a81;font-weight:normal;text-align:right;">0</div>
<div class="t" style="right:171.60px;top:261.91px;font-size:4.9px;line-height:5.88px;color:#737a81;font-weight:normal;text-align:right;">0</div>
<div class="t" style="right:137.60px;top:261.91px;font-size:4.9px;line-height:5.88px;color:#737a81;font-weight:normal;text-align:right;">0</div>
<div class="t" style="right:117.60px;top:261.91px;font-size:4.9px;line-height:5.88px;color:#f0443a;font-weight:bold;text-align:right;">0</div>
<div style="position:absolute;left:942.9px;top:261.54999999999995px;width:23.6px;height:6.4px;background:#d9534f;border-radius:1px;"></div>
<div class="t" style="left:854.70px;width:200px;top:263.29px;font-size:3.6px;line-height:4.32px;color:#fff;font-weight:bold;text-align:center;letter-spacing:-0.1px;">CANCELLED</div>
<svg style="position:absolute;left:974.3px;top:261.95px" width="5.6" height="4.4" viewBox="0 0 12 9"><rect x="0.5" y="0.5" width="11" height="8" fill="none" stroke="#c3c7cb" stroke-width="1"/><path d="M0.5 1 L6 5 L11.5 1" stroke="#c3c7cb" stroke-width="0.9" fill="none"/></svg>
<div class="t" style="left:981.2px;top:261.91px;font-size:4.9px;line-height:5.88px;color:#bfc3c7;font-weight:normal;">0</div>
<div style="position:absolute;left:992.2px;top:258.54999999999995px;width:18.3px;height:11.5px;border:1px solid #eceef1;box-sizing:border-box;border-radius:1.5px;"></div>
<svg style="position:absolute;left:995.9px;top:261.55px" width="6" height="5.4" viewBox="0 0 12 11"><circle cx="3.2" cy="5.5" r="3" fill="#888e94"/><circle cx="9" cy="2.2" r="2" fill="#888e94"/><circle cx="9" cy="8.8" r="2" fill="#888e94"/><path d="M3 5.5 L9 2.2 M3 5.5 L9 8.8" stroke="#888e94" stroke-width="1.4"/></svg>
<svg style="position:absolute;left:1004.2px;top:263.75px" width="2.8" height="1.8" viewBox="0 0 4 2.5"><path d="M0 0 H4 L2 2.5 Z" fill="#7a8086"/></svg>
<div class="t" style="left:82.5px;top:280.41px;font-size:4.9px;line-height:5.88px;color:#737a81;font-weight:normal;">0149-1316</div>
<div class="t" style="left:151.3px;top:280.41px;font-size:4.9px;line-height:5.88px;color:#27a6c4;font-weight:normal;">Sanjay Gupta</div>
<div class="t" style="right:731.60px;top:280.41px;font-size:4.9px;line-height:5.88px;color:#737a81;font-weight:normal;text-align:right;">0</div>
<div class="t" style="right:691.60px;top:280.41px;font-size:4.9px;line-height:5.88px;color:#737a81;font-weight:normal;text-align:right;">430.29</div>
<div class="t" style="right:653.60px;top:280.41px;font-size:4.9px;line-height:5.88px;color:#737a81;font-weight:normal;text-align:right;">0</div>
<div class="t" style="right:619.60px;top:280.41px;font-size:4.9px;line-height:5.88px;color:#737a81;font-weight:normal;text-align:right;">0</div>
<div class="t" style="right:582.60px;top:280.41px;font-size:4.9px;line-height:5.88px;color:#737a81;font-weight:normal;text-align:right;">0</div>
<div class="t" style="right:544.60px;top:280.41px;font-size:4.9px;line-height:5.88px;color:#737a81;font-weight:normal;text-align:right;">0</div>
<div class="t" style="right:508.60px;top:280.41px;font-size:4.9px;line-height:5.88px;color:#737a81;font-weight:normal;text-align:right;">0</div>
<div class="t" style="right:469.60px;top:280.41px;font-size:4.9px;line-height:5.88px;color:#737a81;font-weight:normal;text-align:right;">0</div>
<div class="t" style="right:434.60px;top:280.41px;font-size:4.9px;line-height:5.88px;color:#737a81;font-weight:normal;text-align:right;">0</div>
<div class="t" style="right:397.60px;top:280.41px;font-size:4.9px;line-height:5.88px;color:#737a81;font-weight:normal;text-align:right;">0</div>
<div class="t" style="right:359.60px;top:280.41px;font-size:4.9px;line-height:5.88px;color:#737a81;font-weight:normal;text-align:right;">0</div>
<div class="t" style="right:300.60px;top:280.41px;font-size:4.9px;line-height:5.88px;color:#737a81;font-weight:normal;text-align:right;">0</div>
<div class="t" style="right:258.60px;top:280.41px;font-size:4.9px;line-height:5.88px;color:#737a81;font-weight:normal;text-align:right;">0</div>
<div class="t" style="right:225.60px;top:280.41px;font-size:4.9px;line-height:5.88px;color:#737a81;font-weight:normal;text-align:right;">0</div>
<div class="t" style="right:205.60px;top:280.41px;font-size:4.9px;line-height:5.88px;color:#737a81;font-weight:normal;text-align:right;">0</div>
<div class="t" style="right:171.60px;top:280.41px;font-size:4.9px;line-height:5.88px;color:#737a81;font-weight:normal;text-align:right;">0</div>
<div class="t" style="right:137.60px;top:280.41px;font-size:4.9px;line-height:5.88px;color:#737a81;font-weight:normal;text-align:right;">0</div>
<div class="t" style="right:117.60px;top:280.41px;font-size:4.9px;line-height:5.88px;color:#f0443a;font-weight:bold;text-align:right;">0</div>
<div style="position:absolute;left:951.7px;top:280.04999999999995px;width:14.6px;height:6.3px;background:#6b6b6b;border-radius:1px;"></div>
<div class="t" style="left:859.00px;width:200px;top:281.79px;font-size:3.6px;line-height:4.32px;color:#fff;font-weight:bold;text-align:center;letter-spacing:-0.1px;">DRAFT</div>
<svg style="position:absolute;left:974.3px;top:280.45px" width="5.6" height="4.4" viewBox="0 0 12 9"><rect x="0.5" y="0.5" width="11" height="8" fill="none" stroke="#c3c7cb" stroke-width="1"/><path d="M0.5 1 L6 5 L11.5 1" stroke="#c3c7cb" stroke-width="0.9" fill="none"/></svg>
<div class="t" style="left:981.2px;top:280.41px;font-size:4.9px;line-height:5.88px;color:#bfc3c7;font-weight:normal;">0</div>
<div style="position:absolute;left:992.2px;top:277.04999999999995px;width:18.3px;height:11.5px;border:1px solid #eceef1;box-sizing:border-box;border-radius:1.5px;"></div>
<svg style="position:absolute;left:995.9px;top:280.05px" width="6" height="5.4" viewBox="0 0 12 11"><circle cx="3.2" cy="5.5" r="3" fill="#888e94"/><circle cx="9" cy="2.2" r="2" fill="#888e94"/><circle cx="9" cy="8.8" r="2" fill="#888e94"/><path d="M3 5.5 L9 2.2 M3 5.5 L9 8.8" stroke="#888e94" stroke-width="1.4"/></svg>
<svg style="position:absolute;left:1004.2px;top:282.25px" width="2.8" height="1.8" viewBox="0 0 4 2.5"><path d="M0 0 H4 L2 2.5 Z" fill="#7a8086"/></svg>
<div class="t" style="left:82.5px;top:298.91px;font-size:4.9px;line-height:5.88px;color:#737a81;font-weight:normal;">0149-1317</div>
<div class="t" style="left:151.3px;top:298.91px;font-size:4.9px;line-height:5.88px;color:#27a6c4;font-weight:normal;">Jordan Smith</div>
<div class="t" style="right:731.60px;top:298.91px;font-size:4.9px;line-height:5.88px;color:#737a81;font-weight:normal;text-align:right;">0</div>
<div class="t" style="right:691.60px;top:298.91px;font-size:4.9px;line-height:5.88px;color:#737a81;font-weight:normal;text-align:right;">430.29</div>
<div class="t" style="right:653.60px;top:298.91px;font-size:4.9px;line-height:5.88px;color:#737a81;font-weight:normal;text-align:right;">0</div>
<div class="t" style="right:619.60px;top:298.91px;font-size:4.9px;line-height:5.88px;color:#737a81;font-weight:normal;text-align:right;">0</div>
<div class="t" style="right:582.60px;top:298.91px;font-size:4.9px;line-height:5.88px;color:#737a81;font-weight:normal;text-align:right;">0</div>
<div class="t" style="right:544.60px;top:298.91px;font-size:4.9px;line-height:5.88px;color:#737a81;font-weight:normal;text-align:right;">0</div>
<div class="t" style="right:508.60px;top:298.91px;font-size:4.9px;line-height:5.88px;color:#737a81;font-weight:normal;text-align:right;">0</div>
<div class="t" style="right:469.60px;top:298.91px;font-size:4.9px;line-height:5.88px;color:#737a81;font-weight:normal;text-align:right;">0</div>
<div class="t" style="right:434.60px;top:298.91px;font-size:4.9px;line-height:5.88px;color:#737a81;font-weight:normal;text-align:right;">0</div>
<div class="t" style="right:397.60px;top:298.91px;font-size:4.9px;line-height:5.88px;color:#737a81;font-weight:normal;text-align:right;">0</div>
<div class="t" style="right:359.60px;top:298.91px;font-size:4.9px;line-height:5.88px;color:#737a81;font-weight:normal;text-align:right;">0</div>
<div class="t" style="right:300.60px;top:298.91px;font-size:4.9px;line-height:5.88px;color:#737a81;font-weight:normal;text-align:right;">0</div>
<div class="t" style="right:258.60px;top:298.91px;font-size:4.9px;line-height:5.88px;color:#737a81;font-weight:normal;text-align:right;">0</div>
<div class="t" style="right:225.60px;top:298.91px;font-size:4.9px;line-height:5.88px;color:#737a81;font-weight:normal;text-align:right;">0</div>
<div class="t" style="right:205.60px;top:298.91px;font-size:4.9px;line-height:5.88px;color:#737a81;font-weight:normal;text-align:right;">0</div>
<div class="t" style="right:171.60px;top:298.91px;font-size:4.9px;line-height:5.88px;color:#737a81;font-weight:normal;text-align:right;">0</div>
<div class="t" style="right:137.60px;top:298.91px;font-size:4.9px;line-height:5.88px;color:#737a81;font-weight:normal;text-align:right;">0</div>
<div class="t" style="right:117.60px;top:298.91px;font-size:4.9px;line-height:5.88px;color:#f0443a;font-weight:bold;text-align:right;">0</div>
<div style="position:absolute;left:951.7px;top:298.54999999999995px;width:14.6px;height:6.3px;background:#6b6b6b;border-radius:1px;"></div>
<div class="t" style="left:859.00px;width:200px;top:300.29px;font-size:3.6px;line-height:4.32px;color:#fff;font-weight:bold;text-align:center;letter-spacing:-0.1px;">DRAFT</div>
<svg style="position:absolute;left:974.3px;top:298.95px" width="5.6" height="4.4" viewBox="0 0 12 9"><rect x="0.5" y="0.5" width="11" height="8" fill="none" stroke="#c3c7cb" stroke-width="1"/><path d="M0.5 1 L6 5 L11.5 1" stroke="#c3c7cb" stroke-width="0.9" fill="none"/></svg>
<div class="t" style="left:981.2px;top:298.91px;font-size:4.9px;line-height:5.88px;color:#bfc3c7;font-weight:normal;">0</div>
<div style="position:absolute;left:992.2px;top:295.54999999999995px;width:18.3px;height:11.5px;border:1px solid #eceef1;box-sizing:border-box;border-radius:1.5px;"></div>
<svg style="position:absolute;left:995.9px;top:298.55px" width="6" height="5.4" viewBox="0 0 12 11"><circle cx="3.2" cy="5.5" r="3" fill="#888e94"/><circle cx="9" cy="2.2" r="2" fill="#888e94"/><circle cx="9" cy="8.8" r="2" fill="#888e94"/><path d="M3 5.5 L9 2.2 M3 5.5 L9 8.8" stroke="#888e94" stroke-width="1.4"/></svg>
<svg style="position:absolute;left:1004.2px;top:300.75px" width="2.8" height="1.8" viewBox="0 0 4 2.5"><path d="M0 0 H4 L2 2.5 Z" fill="#7a8086"/></svg>
<div class="t" style="left:82.5px;top:317.41px;font-size:4.9px;line-height:5.88px;color:#737a81;font-weight:normal;">0149-1318</div>
<div class="t" style="left:151.3px;top:317.41px;font-size:4.9px;line-height:5.88px;color:#27a6c4;font-weight:normal;">Lucas Miller</div>
<div class="t" style="right:731.60px;top:317.41px;font-size:4.9px;line-height:5.88px;color:#737a81;font-weight:normal;text-align:right;">0</div>
<div class="t" style="right:691.60px;top:317.41px;font-size:4.9px;line-height:5.88px;color:#737a81;font-weight:normal;text-align:right;">430.29</div>
<div class="t" style="right:653.60px;top:317.41px;font-size:4.9px;line-height:5.88px;color:#737a81;font-weight:normal;text-align:right;">0</div>
<div class="t" style="right:619.60px;top:317.41px;font-size:4.9px;line-height:5.88px;color:#737a81;font-weight:normal;text-align:right;">0</div>
<div class="t" style="right:582.60px;top:317.41px;font-size:4.9px;line-height:5.88px;color:#737a81;font-weight:normal;text-align:right;">0</div>
<div class="t" style="right:544.60px;top:317.41px;font-size:4.9px;line-height:5.88px;color:#737a81;font-weight:normal;text-align:right;">0</div>
<div class="t" style="right:508.60px;top:317.41px;font-size:4.9px;line-height:5.88px;color:#737a81;font-weight:normal;text-align:right;">0</div>
<div class="t" style="right:469.60px;top:317.41px;font-size:4.9px;line-height:5.88px;color:#737a81;font-weight:normal;text-align:right;">0</div>
<div class="t" style="right:434.60px;top:317.41px;font-size:4.9px;line-height:5.88px;color:#737a81;font-weight:normal;text-align:right;">0</div>
<div class="t" style="right:397.60px;top:317.41px;font-size:4.9px;line-height:5.88px;color:#737a81;font-weight:normal;text-align:right;">0</div>
<div class="t" style="right:359.60px;top:317.41px;font-size:4.9px;line-height:5.88px;color:#737a81;font-weight:normal;text-align:right;">0</div>
<div class="t" style="right:300.60px;top:317.41px;font-size:4.9px;line-height:5.88px;color:#737a81;font-weight:normal;text-align:right;">0</div>
<div class="t" style="right:258.60px;top:317.41px;font-size:4.9px;line-height:5.88px;color:#737a81;font-weight:normal;text-align:right;">0</div>
<div class="t" style="right:225.60px;top:317.41px;font-size:4.9px;line-height:5.88px;color:#737a81;font-weight:normal;text-align:right;">0</div>
<div class="t" style="right:205.60px;top:317.41px;font-size:4.9px;line-height:5.88px;color:#737a81;font-weight:normal;text-align:right;">0</div>
<div class="t" style="right:171.60px;top:317.41px;font-size:4.9px;line-height:5.88px;color:#737a81;font-weight:normal;text-align:right;">0</div>
<div class="t" style="right:137.60px;top:317.41px;font-size:4.9px;line-height:5.88px;color:#737a81;font-weight:normal;text-align:right;">0</div>
<div class="t" style="right:117.60px;top:317.41px;font-size:4.9px;line-height:5.88px;color:#f0443a;font-weight:bold;text-align:right;">0</div>
<div style="position:absolute;left:951.7px;top:317.04999999999995px;width:14.6px;height:6.3px;background:#6b6b6b;border-radius:1px;"></div>
<div class="t" style="left:859.00px;width:200px;top:318.79px;font-size:3.6px;line-height:4.32px;color:#fff;font-weight:bold;text-align:center;letter-spacing:-0.1px;">DRAFT</div>
<svg style="position:absolute;left:974.3px;top:317.45px" width="5.6" height="4.4" viewBox="0 0 12 9"><rect x="0.5" y="0.5" width="11" height="8" fill="none" stroke="#c3c7cb" stroke-width="1"/><path d="M0.5 1 L6 5 L11.5 1" stroke="#c3c7cb" stroke-width="0.9" fill="none"/></svg>
<div class="t" style="left:981.2px;top:317.41px;font-size:4.9px;line-height:5.88px;color:#bfc3c7;font-weight:normal;">0</div>
<div style="position:absolute;left:992.2px;top:314.04999999999995px;width:18.3px;height:11.5px;border:1px solid #eceef1;box-sizing:border-box;border-radius:1.5px;"></div>
<svg style="position:absolute;left:995.9px;top:317.05px" width="6" height="5.4" viewBox="0 0 12 11"><circle cx="3.2" cy="5.5" r="3" fill="#888e94"/><circle cx="9" cy="2.2" r="2" fill="#888e94"/><circle cx="9" cy="8.8" r="2" fill="#888e94"/><path d="M3 5.5 L9 2.2 M3 5.5 L9 8.8" stroke="#888e94" stroke-width="1.4"/></svg>
<svg style="position:absolute;left:1004.2px;top:319.25px" width="2.8" height="1.8" viewBox="0 0 4 2.5"><path d="M0 0 H4 L2 2.5 Z" fill="#7a8086"/></svg>
<div class="t" style="left:82.5px;top:335.91px;font-size:4.9px;line-height:5.88px;color:#737a81;font-weight:normal;">0149-1319</div>
<div class="t" style="left:151.3px;top:335.91px;font-size:4.9px;line-height:5.88px;color:#27a6c4;font-weight:normal;">Marcus Thorne</div>
<div class="t" style="right:731.60px;top:335.91px;font-size:4.9px;line-height:5.88px;color:#737a81;font-weight:normal;text-align:right;">0</div>
<div class="t" style="right:691.60px;top:335.91px;font-size:4.9px;line-height:5.88px;color:#737a81;font-weight:normal;text-align:right;">430.29</div>
<div class="t" style="right:653.60px;top:335.91px;font-size:4.9px;line-height:5.88px;color:#737a81;font-weight:normal;text-align:right;">0</div>
<div class="t" style="right:619.60px;top:335.91px;font-size:4.9px;line-height:5.88px;color:#737a81;font-weight:normal;text-align:right;">0</div>
<div class="t" style="right:582.60px;top:335.91px;font-size:4.9px;line-height:5.88px;color:#737a81;font-weight:normal;text-align:right;">0</div>
<div class="t" style="right:544.60px;top:335.91px;font-size:4.9px;line-height:5.88px;color:#737a81;font-weight:normal;text-align:right;">0</div>
<div class="t" style="right:508.60px;top:335.91px;font-size:4.9px;line-height:5.88px;color:#737a81;font-weight:normal;text-align:right;">0</div>
<div class="t" style="right:469.60px;top:335.91px;font-size:4.9px;line-height:5.88px;color:#737a81;font-weight:normal;text-align:right;">0</div>
<div class="t" style="right:434.60px;top:335.91px;font-size:4.9px;line-height:5.88px;color:#737a81;font-weight:normal;text-align:right;">0</div>
<div class="t" style="right:397.60px;top:335.91px;font-size:4.9px;line-height:5.88px;color:#737a81;font-weight:normal;text-align:right;">0</div>
<div class="t" style="right:359.60px;top:335.91px;font-size:4.9px;line-height:5.88px;color:#737a81;font-weight:normal;text-align:right;">0</div>
<div class="t" style="right:300.60px;top:335.91px;font-size:4.9px;line-height:5.88px;color:#737a81;font-weight:normal;text-align:right;">0</div>
<div class="t" style="right:258.60px;top:335.91px;font-size:4.9px;line-height:5.88px;color:#737a81;font-weight:normal;text-align:right;">0</div>
<div class="t" style="right:225.60px;top:335.91px;font-size:4.9px;line-height:5.88px;color:#737a81;font-weight:normal;text-align:right;">0</div>
<div class="t" style="right:205.60px;top:335.91px;font-size:4.9px;line-height:5.88px;color:#737a81;font-weight:normal;text-align:right;">0</div>
<div class="t" style="right:171.60px;top:335.91px;font-size:4.9px;line-height:5.88px;color:#737a81;font-weight:normal;text-align:right;">0</div>
<div class="t" style="right:137.60px;top:335.91px;font-size:4.9px;line-height:5.88px;color:#737a81;font-weight:normal;text-align:right;">0</div>
<div class="t" style="right:117.60px;top:335.91px;font-size:4.9px;line-height:5.88px;color:#f0443a;font-weight:bold;text-align:right;">0</div>
<div style="position:absolute;left:951.7px;top:335.54999999999995px;width:14.6px;height:6.3px;background:#6b6b6b;border-radius:1px;"></div>
<div class="t" style="left:859.00px;width:200px;top:337.29px;font-size:3.6px;line-height:4.32px;color:#fff;font-weight:bold;text-align:center;letter-spacing:-0.1px;">DRAFT</div>
<svg style="position:absolute;left:974.3px;top:335.95px" width="5.6" height="4.4" viewBox="0 0 12 9"><rect x="0.5" y="0.5" width="11" height="8" fill="none" stroke="#c3c7cb" stroke-width="1"/><path d="M0.5 1 L6 5 L11.5 1" stroke="#c3c7cb" stroke-width="0.9" fill="none"/></svg>
<div class="t" style="left:981.2px;top:335.91px;font-size:4.9px;line-height:5.88px;color:#bfc3c7;font-weight:normal;">0</div>
<div style="position:absolute;left:992.2px;top:332.54999999999995px;width:18.3px;height:11.5px;border:1px solid #eceef1;box-sizing:border-box;border-radius:1.5px;"></div>
<svg style="position:absolute;left:995.9px;top:335.55px" width="6" height="5.4" viewBox="0 0 12 11"><circle cx="3.2" cy="5.5" r="3" fill="#888e94"/><circle cx="9" cy="2.2" r="2" fill="#888e94"/><circle cx="9" cy="8.8" r="2" fill="#888e94"/><path d="M3 5.5 L9 2.2 M3 5.5 L9 8.8" stroke="#888e94" stroke-width="1.4"/></svg>
<svg style="position:absolute;left:1004.2px;top:337.75px" width="2.8" height="1.8" viewBox="0 0 4 2.5"><path d="M0 0 H4 L2 2.5 Z" fill="#7a8086"/></svg>
<div class="t" style="left:82.5px;top:354.41px;font-size:4.9px;line-height:5.88px;color:#737a81;font-weight:normal;">0149-1320</div>
<div class="t" style="left:151.3px;top:354.41px;font-size:4.9px;line-height:5.88px;color:#27a6c4;font-weight:normal;">Mark Zuckerberg</div>
<div class="t" style="right:731.60px;top:354.41px;font-size:4.9px;line-height:5.88px;color:#737a81;font-weight:normal;text-align:right;">0</div>
<div class="t" style="right:691.60px;top:354.41px;font-size:4.9px;line-height:5.88px;color:#737a81;font-weight:normal;text-align:right;">0</div>
<div class="t" style="right:653.60px;top:354.41px;font-size:4.9px;line-height:5.88px;color:#737a81;font-weight:normal;text-align:right;">0</div>
<div class="t" style="right:619.60px;top:354.41px;font-size:4.9px;line-height:5.88px;color:#737a81;font-weight:normal;text-align:right;">0</div>
<div class="t" style="right:582.60px;top:354.41px;font-size:4.9px;line-height:5.88px;color:#737a81;font-weight:normal;text-align:right;">0</div>
<div class="t" style="right:544.60px;top:354.41px;font-size:4.9px;line-height:5.88px;color:#737a81;font-weight:normal;text-align:right;">0</div>
<div class="t" style="right:508.60px;top:354.41px;font-size:4.9px;line-height:5.88px;color:#737a81;font-weight:normal;text-align:right;">0</div>
<div class="t" style="right:469.60px;top:354.41px;font-size:4.9px;line-height:5.88px;color:#737a81;font-weight:normal;text-align:right;">0</div>
<div class="t" style="right:434.60px;top:354.41px;font-size:4.9px;line-height:5.88px;color:#737a81;font-weight:normal;text-align:right;">0</div>
<div class="t" style="right:397.60px;top:354.41px;font-size:4.9px;line-height:5.88px;color:#737a81;font-weight:normal;text-align:right;">0</div>
<div class="t" style="right:359.60px;top:354.41px;font-size:4.9px;line-height:5.88px;color:#737a81;font-weight:normal;text-align:right;">0</div>
<div class="t" style="right:300.60px;top:354.41px;font-size:4.9px;line-height:5.88px;color:#737a81;font-weight:normal;text-align:right;">0</div>
<div class="t" style="right:258.60px;top:354.41px;font-size:4.9px;line-height:5.88px;color:#737a81;font-weight:normal;text-align:right;">0</div>
<div class="t" style="right:225.60px;top:354.41px;font-size:4.9px;line-height:5.88px;color:#737a81;font-weight:normal;text-align:right;">0</div>
<div class="t" style="right:205.60px;top:354.41px;font-size:4.9px;line-height:5.88px;color:#737a81;font-weight:normal;text-align:right;">0</div>
<div class="t" style="right:171.60px;top:354.41px;font-size:4.9px;line-height:5.88px;color:#737a81;font-weight:normal;text-align:right;">0</div>
<div class="t" style="right:137.60px;top:354.41px;font-size:4.9px;line-height:5.88px;color:#737a81;font-weight:normal;text-align:right;">0</div>
<div class="t" style="right:117.60px;top:354.41px;font-size:4.9px;line-height:5.88px;color:#f0443a;font-weight:bold;text-align:right;">0</div>
<div style="position:absolute;left:951.7px;top:354.04999999999995px;width:14.6px;height:6.3px;background:#6b6b6b;border-radius:1px;"></div>
<div class="t" style="left:859.00px;width:200px;top:355.79px;font-size:3.6px;line-height:4.32px;color:#fff;font-weight:bold;text-align:center;letter-spacing:-0.1px;">DRAFT</div>
<svg style="position:absolute;left:974.3px;top:354.45px" width="5.6" height="4.4" viewBox="0 0 12 9"><rect x="0.5" y="0.5" width="11" height="8" fill="none" stroke="#c3c7cb" stroke-width="1"/><path d="M0.5 1 L6 5 L11.5 1" stroke="#c3c7cb" stroke-width="0.9" fill="none"/></svg>
<div class="t" style="left:981.2px;top:354.41px;font-size:4.9px;line-height:5.88px;color:#bfc3c7;font-weight:normal;">0</div>
<div style="position:absolute;left:992.2px;top:351.04999999999995px;width:18.3px;height:11.5px;border:1px solid #eceef1;box-sizing:border-box;border-radius:1.5px;"></div>
<svg style="position:absolute;left:995.9px;top:354.05px" width="6" height="5.4" viewBox="0 0 12 11"><circle cx="3.2" cy="5.5" r="3" fill="#888e94"/><circle cx="9" cy="2.2" r="2" fill="#888e94"/><circle cx="9" cy="8.8" r="2" fill="#888e94"/><path d="M3 5.5 L9 2.2 M3 5.5 L9 8.8" stroke="#888e94" stroke-width="1.4"/></svg>
<svg style="position:absolute;left:1004.2px;top:356.25px" width="2.8" height="1.8" viewBox="0 0 4 2.5"><path d="M0 0 H4 L2 2.5 Z" fill="#7a8086"/></svg>
<div class="t" style="left:82.5px;top:372.91px;font-size:4.9px;line-height:5.88px;color:#737a81;font-weight:normal;">0149-1321</div>
<div class="t" style="left:151.3px;top:372.91px;font-size:4.9px;line-height:5.88px;color:#27a6c4;font-weight:normal;">Johmar Rio</div>
<div class="t" style="right:731.60px;top:372.91px;font-size:4.9px;line-height:5.88px;color:#737a81;font-weight:normal;text-align:right;">0</div>
<div class="t" style="right:691.60px;top:372.91px;font-size:4.9px;line-height:5.88px;color:#737a81;font-weight:normal;text-align:right;">216.35</div>
<div class="t" style="right:653.60px;top:372.91px;font-size:4.9px;line-height:5.88px;color:#737a81;font-weight:normal;text-align:right;">0</div>
<div class="t" style="right:619.60px;top:372.91px;font-size:4.9px;line-height:5.88px;color:#737a81;font-weight:normal;text-align:right;">0</div>
<div class="t" style="right:582.60px;top:372.91px;font-size:4.9px;line-height:5.88px;color:#737a81;font-weight:normal;text-align:right;">0</div>
<div class="t" style="right:544.60px;top:372.91px;font-size:4.9px;line-height:5.88px;color:#737a81;font-weight:normal;text-align:right;">0</div>
<div class="t" style="right:508.60px;top:372.91px;font-size:4.9px;line-height:5.88px;color:#737a81;font-weight:normal;text-align:right;">0</div>
<div class="t" style="right:469.60px;top:372.91px;font-size:4.9px;line-height:5.88px;color:#737a81;font-weight:normal;text-align:right;">0</div>
<div class="t" style="right:434.60px;top:372.91px;font-size:4.9px;line-height:5.88px;color:#737a81;font-weight:normal;text-align:right;">0</div>
<div class="t" style="right:397.60px;top:372.91px;font-size:4.9px;line-height:5.88px;color:#737a81;font-weight:normal;text-align:right;">0</div>
<div class="t" style="right:359.60px;top:372.91px;font-size:4.9px;line-height:5.88px;color:#737a81;font-weight:normal;text-align:right;">0</div>
<div class="t" style="right:300.60px;top:372.91px;font-size:4.9px;line-height:5.88px;color:#737a81;font-weight:normal;text-align:right;">0</div>
<div class="t" style="right:258.60px;top:372.91px;font-size:4.9px;line-height:5.88px;color:#737a81;font-weight:normal;text-align:right;">0</div>
<div class="t" style="right:225.60px;top:372.91px;font-size:4.9px;line-height:5.88px;color:#737a81;font-weight:normal;text-align:right;">0</div>
<div class="t" style="right:205.60px;top:372.91px;font-size:4.9px;line-height:5.88px;color:#737a81;font-weight:normal;text-align:right;">0</div>
<div class="t" style="right:171.60px;top:372.91px;font-size:4.9px;line-height:5.88px;color:#737a81;font-weight:normal;text-align:right;">0</div>
<div class="t" style="right:137.60px;top:372.91px;font-size:4.9px;line-height:5.88px;color:#737a81;font-weight:normal;text-align:right;">0</div>
<div class="t" style="right:117.60px;top:372.91px;font-size:4.9px;line-height:5.88px;color:#f0443a;font-weight:bold;text-align:right;">0</div>
<div style="position:absolute;left:951.7px;top:372.54999999999995px;width:14.6px;height:6.3px;background:#6b6b6b;border-radius:1px;"></div>
<div class="t" style="left:859.00px;width:200px;top:374.29px;font-size:3.6px;line-height:4.32px;color:#fff;font-weight:bold;text-align:center;letter-spacing:-0.1px;">DRAFT</div>
<svg style="position:absolute;left:974.3px;top:372.95px" width="5.6" height="4.4" viewBox="0 0 12 9"><rect x="0.5" y="0.5" width="11" height="8" fill="none" stroke="#c3c7cb" stroke-width="1"/><path d="M0.5 1 L6 5 L11.5 1" stroke="#c3c7cb" stroke-width="0.9" fill="none"/></svg>
<div class="t" style="left:981.2px;top:372.91px;font-size:4.9px;line-height:5.88px;color:#bfc3c7;font-weight:normal;">0</div>
<div style="position:absolute;left:992.2px;top:369.54999999999995px;width:18.3px;height:11.5px;border:1px solid #eceef1;box-sizing:border-box;border-radius:1.5px;"></div>
<svg style="position:absolute;left:995.9px;top:372.55px" width="6" height="5.4" viewBox="0 0 12 11"><circle cx="3.2" cy="5.5" r="3" fill="#888e94"/><circle cx="9" cy="2.2" r="2" fill="#888e94"/><circle cx="9" cy="8.8" r="2" fill="#888e94"/><path d="M3 5.5 L9 2.2 M3 5.5 L9 8.8" stroke="#888e94" stroke-width="1.4"/></svg>
<svg style="position:absolute;left:1004.2px;top:374.75px" width="2.8" height="1.8" viewBox="0 0 4 2.5"><path d="M0 0 H4 L2 2.5 Z" fill="#7a8086"/></svg>
<div class="t" style="left:82.5px;top:391.41px;font-size:4.9px;line-height:5.88px;color:#737a81;font-weight:normal;">0149-1322</div>
<div class="t" style="left:151.3px;top:391.41px;font-size:4.9px;line-height:5.88px;color:#27a6c4;font-weight:normal;">BC Francis</div>
<div class="t" style="right:731.60px;top:391.41px;font-size:4.9px;line-height:5.88px;color:#737a81;font-weight:normal;text-align:right;">0</div>
<div class="t" style="right:691.60px;top:391.41px;font-size:4.9px;line-height:5.88px;color:#737a81;font-weight:normal;text-align:right;">160.92</div>
<div class="t" style="right:653.60px;top:391.41px;font-size:4.9px;line-height:5.88px;color:#737a81;font-weight:normal;text-align:right;">0</div>
<div class="t" style="right:619.60px;top:391.41px;font-size:4.9px;line-height:5.88px;color:#737a81;font-weight:normal;text-align:right;">0</div>
<div class="t" style="right:582.60px;top:391.41px;font-size:4.9px;line-height:5.88px;color:#737a81;font-weight:normal;text-align:right;">0</div>
<div class="t" style="right:544.60px;top:391.41px;font-size:4.9px;line-height:5.88px;color:#737a81;font-weight:normal;text-align:right;">0</div>
<div class="t" style="right:508.60px;top:391.41px;font-size:4.9px;line-height:5.88px;color:#737a81;font-weight:normal;text-align:right;">0</div>
<div class="t" style="right:469.60px;top:391.41px;font-size:4.9px;line-height:5.88px;color:#737a81;font-weight:normal;text-align:right;">0</div>
<div class="t" style="right:434.60px;top:391.41px;font-size:4.9px;line-height:5.88px;color:#737a81;font-weight:normal;text-align:right;">0</div>
<div class="t" style="right:397.60px;top:391.41px;font-size:4.9px;line-height:5.88px;color:#737a81;font-weight:normal;text-align:right;">0</div>
<div class="t" style="right:359.60px;top:391.41px;font-size:4.9px;line-height:5.88px;color:#737a81;font-weight:normal;text-align:right;">0</div>
<div class="t" style="right:300.60px;top:391.41px;font-size:4.9px;line-height:5.88px;color:#737a81;font-weight:normal;text-align:right;">0</div>
<div class="t" style="right:258.60px;top:391.41px;font-size:4.9px;line-height:5.88px;color:#737a81;font-weight:normal;text-align:right;">0</div>
<div class="t" style="right:225.60px;top:391.41px;font-size:4.9px;line-height:5.88px;color:#737a81;font-weight:normal;text-align:right;">0</div>
<div class="t" style="right:205.60px;top:391.41px;font-size:4.9px;line-height:5.88px;color:#737a81;font-weight:normal;text-align:right;">0</div>
<div class="t" style="right:171.60px;top:391.41px;font-size:4.9px;line-height:5.88px;color:#737a81;font-weight:normal;text-align:right;">0</div>
<div class="t" style="right:137.60px;top:391.41px;font-size:4.9px;line-height:5.88px;color:#737a81;font-weight:normal;text-align:right;">0</div>
<div class="t" style="right:117.60px;top:391.41px;font-size:4.9px;line-height:5.88px;color:#f0443a;font-weight:bold;text-align:right;">0</div>
<div style="position:absolute;left:951.7px;top:391.04999999999995px;width:14.6px;height:6.3px;background:#6b6b6b;border-radius:1px;"></div>
<div class="t" style="left:859.00px;width:200px;top:392.79px;font-size:3.6px;line-height:4.32px;color:#fff;font-weight:bold;text-align:center;letter-spacing:-0.1px;">DRAFT</div>
<svg style="position:absolute;left:974.3px;top:391.45px" width="5.6" height="4.4" viewBox="0 0 12 9"><rect x="0.5" y="0.5" width="11" height="8" fill="none" stroke="#c3c7cb" stroke-width="1"/><path d="M0.5 1 L6 5 L11.5 1" stroke="#c3c7cb" stroke-width="0.9" fill="none"/></svg>
<div class="t" style="left:981.2px;top:391.41px;font-size:4.9px;line-height:5.88px;color:#bfc3c7;font-weight:normal;">0</div>
<div style="position:absolute;left:992.2px;top:388.04999999999995px;width:18.3px;height:11.5px;border:1px solid #eceef1;box-sizing:border-box;border-radius:1.5px;"></div>
<svg style="position:absolute;left:995.9px;top:391.05px" width="6" height="5.4" viewBox="0 0 12 11"><circle cx="3.2" cy="5.5" r="3" fill="#888e94"/><circle cx="9" cy="2.2" r="2" fill="#888e94"/><circle cx="9" cy="8.8" r="2" fill="#888e94"/><path d="M3 5.5 L9 2.2 M3 5.5 L9 8.8" stroke="#888e94" stroke-width="1.4"/></svg>
<svg style="position:absolute;left:1004.2px;top:393.25px" width="2.8" height="1.8" viewBox="0 0 4 2.5"><path d="M0 0 H4 L2 2.5 Z" fill="#7a8086"/></svg>
<div class="t" style="left:82.5px;top:409.91px;font-size:4.9px;line-height:5.88px;color:#737a81;font-weight:normal;">0149-1323</div>
<div class="t" style="left:151.3px;top:409.91px;font-size:4.9px;line-height:5.88px;color:#27a6c4;font-weight:normal;">BC Ramon</div>
<div class="t" style="right:731.60px;top:409.91px;font-size:4.9px;line-height:5.88px;color:#737a81;font-weight:normal;text-align:right;">0</div>
<div class="t" style="right:691.60px;top:409.91px;font-size:4.9px;line-height:5.88px;color:#737a81;font-weight:normal;text-align:right;">0</div>
<div class="t" style="right:653.60px;top:409.91px;font-size:4.9px;line-height:5.88px;color:#737a81;font-weight:normal;text-align:right;">0</div>
<div class="t" style="right:619.60px;top:409.91px;font-size:4.9px;line-height:5.88px;color:#737a81;font-weight:normal;text-align:right;">0</div>
<div class="t" style="right:582.60px;top:409.91px;font-size:4.9px;line-height:5.88px;color:#737a81;font-weight:normal;text-align:right;">0</div>
<div class="t" style="right:544.60px;top:409.91px;font-size:4.9px;line-height:5.88px;color:#737a81;font-weight:normal;text-align:right;">0</div>
<div class="t" style="right:508.60px;top:409.91px;font-size:4.9px;line-height:5.88px;color:#737a81;font-weight:normal;text-align:right;">0</div>
<div class="t" style="right:469.60px;top:409.91px;font-size:4.9px;line-height:5.88px;color:#737a81;font-weight:normal;text-align:right;">0</div>
<div class="t" style="right:434.60px;top:409.91px;font-size:4.9px;line-height:5.88px;color:#737a81;font-weight:normal;text-align:right;">0</div>
<div class="t" style="right:397.60px;top:409.91px;font-size:4.9px;line-height:5.88px;color:#737a81;font-weight:normal;text-align:right;">0</div>
<div class="t" style="right:359.60px;top:409.91px;font-size:4.9px;line-height:5.88px;color:#737a81;font-weight:normal;text-align:right;">0</div>
<div class="t" style="right:300.60px;top:409.91px;font-size:4.9px;line-height:5.88px;color:#737a81;font-weight:normal;text-align:right;">0</div>
<div class="t" style="right:258.60px;top:409.91px;font-size:4.9px;line-height:5.88px;color:#737a81;font-weight:normal;text-align:right;">0</div>
<div class="t" style="right:225.60px;top:409.91px;font-size:4.9px;line-height:5.88px;color:#737a81;font-weight:normal;text-align:right;">0</div>
<div class="t" style="right:205.60px;top:409.91px;font-size:4.9px;line-height:5.88px;color:#737a81;font-weight:normal;text-align:right;">0</div>
<div class="t" style="right:171.60px;top:409.91px;font-size:4.9px;line-height:5.88px;color:#737a81;font-weight:normal;text-align:right;">0</div>
<div class="t" style="right:137.60px;top:409.91px;font-size:4.9px;line-height:5.88px;color:#737a81;font-weight:normal;text-align:right;">0</div>
<div class="t" style="right:117.60px;top:409.91px;font-size:4.9px;line-height:5.88px;color:#f0443a;font-weight:bold;text-align:right;">0</div>
<div style="position:absolute;left:951.7px;top:409.54999999999995px;width:14.6px;height:6.3px;background:#6b6b6b;border-radius:1px;"></div>
<div class="t" style="left:859.00px;width:200px;top:411.29px;font-size:3.6px;line-height:4.32px;color:#fff;font-weight:bold;text-align:center;letter-spacing:-0.1px;">DRAFT</div>
<svg style="position:absolute;left:974.3px;top:409.95px" width="5.6" height="4.4" viewBox="0 0 12 9"><rect x="0.5" y="0.5" width="11" height="8" fill="none" stroke="#c3c7cb" stroke-width="1"/><path d="M0.5 1 L6 5 L11.5 1" stroke="#c3c7cb" stroke-width="0.9" fill="none"/></svg>
<div class="t" style="left:981.2px;top:409.91px;font-size:4.9px;line-height:5.88px;color:#bfc3c7;font-weight:normal;">0</div>
<div style="position:absolute;left:992.2px;top:406.54999999999995px;width:18.3px;height:11.5px;border:1px solid #eceef1;box-sizing:border-box;border-radius:1.5px;"></div>
<svg style="position:absolute;left:995.9px;top:409.55px" width="6" height="5.4" viewBox="0 0 12 11"><circle cx="3.2" cy="5.5" r="3" fill="#888e94"/><circle cx="9" cy="2.2" r="2" fill="#888e94"/><circle cx="9" cy="8.8" r="2" fill="#888e94"/><path d="M3 5.5 L9 2.2 M3 5.5 L9 8.8" stroke="#888e94" stroke-width="1.4"/></svg>
<svg style="position:absolute;left:1004.2px;top:411.75px" width="2.8" height="1.8" viewBox="0 0 4 2.5"><path d="M0 0 H4 L2 2.5 Z" fill="#7a8086"/></svg>
<div style="position:absolute;left:940.2px;top:286.6px;width:29.5px;height:3.4px;background:#e8141c;border-radius:2px;"></div>
<div class="t" style="right:731.30px;top:425.76px;font-size:4.9px;line-height:5.88px;color:#4a525a;font-weight:bold;text-align:right;letter-spacing:-0.05px;">P0.00</div>
<div class="t" style="right:691.30px;top:425.76px;font-size:4.9px;line-height:5.88px;color:#4a525a;font-weight:bold;text-align:right;letter-spacing:-0.05px;">P7,528.72</div>
<div class="t" style="right:653.30px;top:425.76px;font-size:4.9px;line-height:5.88px;color:#4a525a;font-weight:bold;text-align:right;letter-spacing:-0.05px;">0.00</div>
<div class="t" style="right:619.30px;top:425.76px;font-size:4.9px;line-height:5.88px;color:#4a525a;font-weight:bold;text-align:right;letter-spacing:-0.05px;">0.00</div>
<div class="t" style="right:582.30px;top:425.76px;font-size:4.9px;line-height:5.88px;color:#4a525a;font-weight:bold;text-align:right;letter-spacing:-0.05px;">0.00</div>
<div class="t" style="right:544.30px;top:425.76px;font-size:4.9px;line-height:5.88px;color:#4a525a;font-weight:bold;text-align:right;letter-spacing:-0.05px;">0.00</div>
<div class="t" style="right:508.30px;top:425.76px;font-size:4.9px;line-height:5.88px;color:#4a525a;font-weight:bold;text-align:right;letter-spacing:-0.05px;">P0.00</div>
<div class="t" style="right:469.30px;top:425.76px;font-size:4.9px;line-height:5.88px;color:#4a525a;font-weight:bold;text-align:right;letter-spacing:-0.05px;">P0.00</div>
<div class="t" style="right:434.30px;top:425.76px;font-size:4.9px;line-height:5.88px;color:#4a525a;font-weight:bold;text-align:right;letter-spacing:-0.05px;">P0.00</div>
<div class="t" style="right:397.30px;top:425.76px;font-size:4.9px;line-height:5.88px;color:#4a525a;font-weight:bold;text-align:right;letter-spacing:-0.05px;">P0.00</div>
<div class="t" style="right:359.30px;top:425.76px;font-size:4.9px;line-height:5.88px;color:#4a525a;font-weight:bold;text-align:right;letter-spacing:-0.05px;">P0.00</div>
<div class="t" style="right:300.30px;top:425.76px;font-size:4.9px;line-height:5.88px;color:#4a525a;font-weight:bold;text-align:right;letter-spacing:-0.05px;">P0.00</div>
<div class="t" style="right:258.30px;top:425.76px;font-size:4.9px;line-height:5.88px;color:#4a525a;font-weight:bold;text-align:right;letter-spacing:-0.05px;">P0.00</div>
<div class="t" style="right:225.30px;top:425.76px;font-size:4.9px;line-height:5.88px;color:#4a525a;font-weight:bold;text-align:right;letter-spacing:-0.05px;">P0.00</div>
<div class="t" style="right:205.30px;top:425.76px;font-size:4.9px;line-height:5.88px;color:#4a525a;font-weight:bold;text-align:right;letter-spacing:-0.05px;">P0.00</div>
<div class="t" style="right:171.30px;top:425.76px;font-size:4.9px;line-height:5.88px;color:#4a525a;font-weight:bold;text-align:right;letter-spacing:-0.05px;">P0.00</div>
<div class="t" style="right:137.30px;top:425.76px;font-size:4.9px;line-height:5.88px;color:#4a525a;font-weight:bold;text-align:right;letter-spacing:-0.05px;">P0.00</div>
<div class="t" style="right:117.30px;top:425.76px;font-size:4.9px;line-height:5.88px;color:#4a525a;font-weight:bold;text-align:right;letter-spacing:-0.05px;">P0.00</div>
<div class="t" style="right:88.30px;top:425.76px;font-size:4.9px;line-height:5.88px;color:#4a525a;font-weight:bold;text-align:right;letter-spacing:-0.05px;">P0.00</div>
<div class="t" style="right:731.30px;top:441.36px;font-size:4.9px;line-height:5.88px;color:#4a525a;font-weight:bold;text-align:right;letter-spacing:-0.05px;">P0.00</div>
<div class="t" style="right:691.30px;top:441.36px;font-size:4.9px;line-height:5.88px;color:#4a525a;font-weight:bold;text-align:right;letter-spacing:-0.05px;">P7,528.72</div>
<div class="t" style="right:653.30px;top:441.36px;font-size:4.9px;line-height:5.88px;color:#4a525a;font-weight:bold;text-align:right;letter-spacing:-0.05px;">0.00</div>
<div class="t" style="right:619.30px;top:441.36px;font-size:4.9px;line-height:5.88px;color:#4a525a;font-weight:bold;text-align:right;letter-spacing:-0.05px;">0.00</div>
<div class="t" style="right:582.30px;top:441.36px;font-size:4.9px;line-height:5.88px;color:#4a525a;font-weight:bold;text-align:right;letter-spacing:-0.05px;">0.00</div>
<div class="t" style="right:544.30px;top:441.36px;font-size:4.9px;line-height:5.88px;color:#4a525a;font-weight:bold;text-align:right;letter-spacing:-0.05px;">0.00</div>
<div class="t" style="right:508.30px;top:441.36px;font-size:4.9px;line-height:5.88px;color:#4a525a;font-weight:bold;text-align:right;letter-spacing:-0.05px;">P0.00</div>
<div class="t" style="right:469.30px;top:441.36px;font-size:4.9px;line-height:5.88px;color:#4a525a;font-weight:bold;text-align:right;letter-spacing:-0.05px;">P0.00</div>
<div class="t" style="right:434.30px;top:441.36px;font-size:4.9px;line-height:5.88px;color:#4a525a;font-weight:bold;text-align:right;letter-spacing:-0.05px;">P0.00</div>
<div class="t" style="right:397.30px;top:441.36px;font-size:4.9px;line-height:5.88px;color:#4a525a;font-weight:bold;text-align:right;letter-spacing:-0.05px;">P0.00</div>
<div class="t" style="right:359.30px;top:441.36px;font-size:4.9px;line-height:5.88px;color:#4a525a;font-weight:bold;text-align:right;letter-spacing:-0.05px;">P0.00</div>
<div class="t" style="right:300.30px;top:441.36px;font-size:4.9px;line-height:5.88px;color:#4a525a;font-weight:bold;text-align:right;letter-spacing:-0.05px;">P0.00</div>
<div class="t" style="right:258.30px;top:441.36px;font-size:4.9px;line-height:5.88px;color:#4a525a;font-weight:bold;text-align:right;letter-spacing:-0.05px;">P0.00</div>
<div class="t" style="right:225.30px;top:441.36px;font-size:4.9px;line-height:5.88px;color:#4a525a;font-weight:bold;text-align:right;letter-spacing:-0.05px;">P0.00</div>
<div class="t" style="right:205.30px;top:441.36px;font-size:4.9px;line-height:5.88px;color:#4a525a;font-weight:bold;text-align:right;letter-spacing:-0.05px;">P0.00</div>
<div class="t" style="right:171.30px;top:441.36px;font-size:4.9px;line-height:5.88px;color:#4a525a;font-weight:bold;text-align:right;letter-spacing:-0.05px;">P0.00</div>
<div class="t" style="right:137.30px;top:441.36px;font-size:4.9px;line-height:5.88px;color:#4a525a;font-weight:bold;text-align:right;letter-spacing:-0.05px;">P0.00</div>
<div class="t" style="right:117.30px;top:441.36px;font-size:4.9px;line-height:5.88px;color:#4a525a;font-weight:bold;text-align:right;letter-spacing:-0.05px;">P0.00</div>
<div class="t" style="right:88.30px;top:441.36px;font-size:4.9px;line-height:5.88px;color:#4a525a;font-weight:bold;text-align:right;letter-spacing:-0.05px;">P0.00</div>
<div class="t" style="left:82px;top:460.10px;font-size:5.0px;line-height:6.00px;color:#b0b5ba;font-weight:normal;">1-10 / 13</div>
<div style="position:absolute;left:958.2px;top:457.3px;width:51.1px;height:12px;border:0.8px solid #e6e9ec;box-sizing:border-box;"></div>
<div style="position:absolute;left:970.6px;top:457.3px;width:13.2px;height:12px;background:#ebedf1;"></div>
<div style="position:absolute;left:970.6px;top:457.3px;width:0.8px;height:12px;background:#e6e9ec;"></div>
<div style="position:absolute;left:983.8px;top:457.3px;width:0.8px;height:12px;background:#e6e9ec;"></div>
<div style="position:absolute;left:996.5px;top:457.3px;width:0.8px;height:12px;background:#e6e9ec;"></div>
<div class="t" style="left:864.40px;width:200px;top:459.28px;font-size:6.2px;line-height:7.44px;color:#5b6470;font-weight:normal;text-align:center;">&laquo;</div>
<div class="t" style="left:877.20px;width:200px;top:461.12px;font-size:4.8px;line-height:5.76px;color:#3e4650;font-weight:normal;text-align:center;">1</div>
<div class="t" style="left:890.20px;width:200px;top:461.12px;font-size:4.8px;line-height:5.76px;color:#5b6470;font-weight:normal;text-align:center;">2</div>
<div class="t" style="left:902.90px;width:200px;top:459.28px;font-size:6.2px;line-height:7.44px;color:#5b6470;font-weight:normal;text-align:center;">&raquo;</div>
<div class="t" style="left:872.5px;top:531.8px;font-size:10.35px;line-height:13.1px;color:#8b1530;font-weight:bold;letter-spacing:0px">Successful Confirmation<br>Message</div>
<div style="position:absolute;left:929.5px;top:544.2px;width:94.5px;height:32.5px;border:3.5px solid #ea1c24;border-right-width:3px;box-sizing:border-box;background:#f1f8f9;"></div>
<div style="position:absolute;left:935.2px;top:550.5px;width:83.8px;height:20px;background:#12b08c;border-radius:1px;"></div>
<div class="t" style="left:940.5px;top:556.20px;font-size:5.0px;line-height:6.00px;color:#fff;font-weight:normal;letter-spacing:-0.05px;">The record has been saved.</div>
<svg style="position:absolute;left:1009.6px;top:557.6px" width="4.4" height="4.4" viewBox="0 0 8 8"><path d="M1 1 L7 7 M7 1 L1 7" stroke="#6fcfb8" stroke-width="1.2"/></svg>
</body></html>
